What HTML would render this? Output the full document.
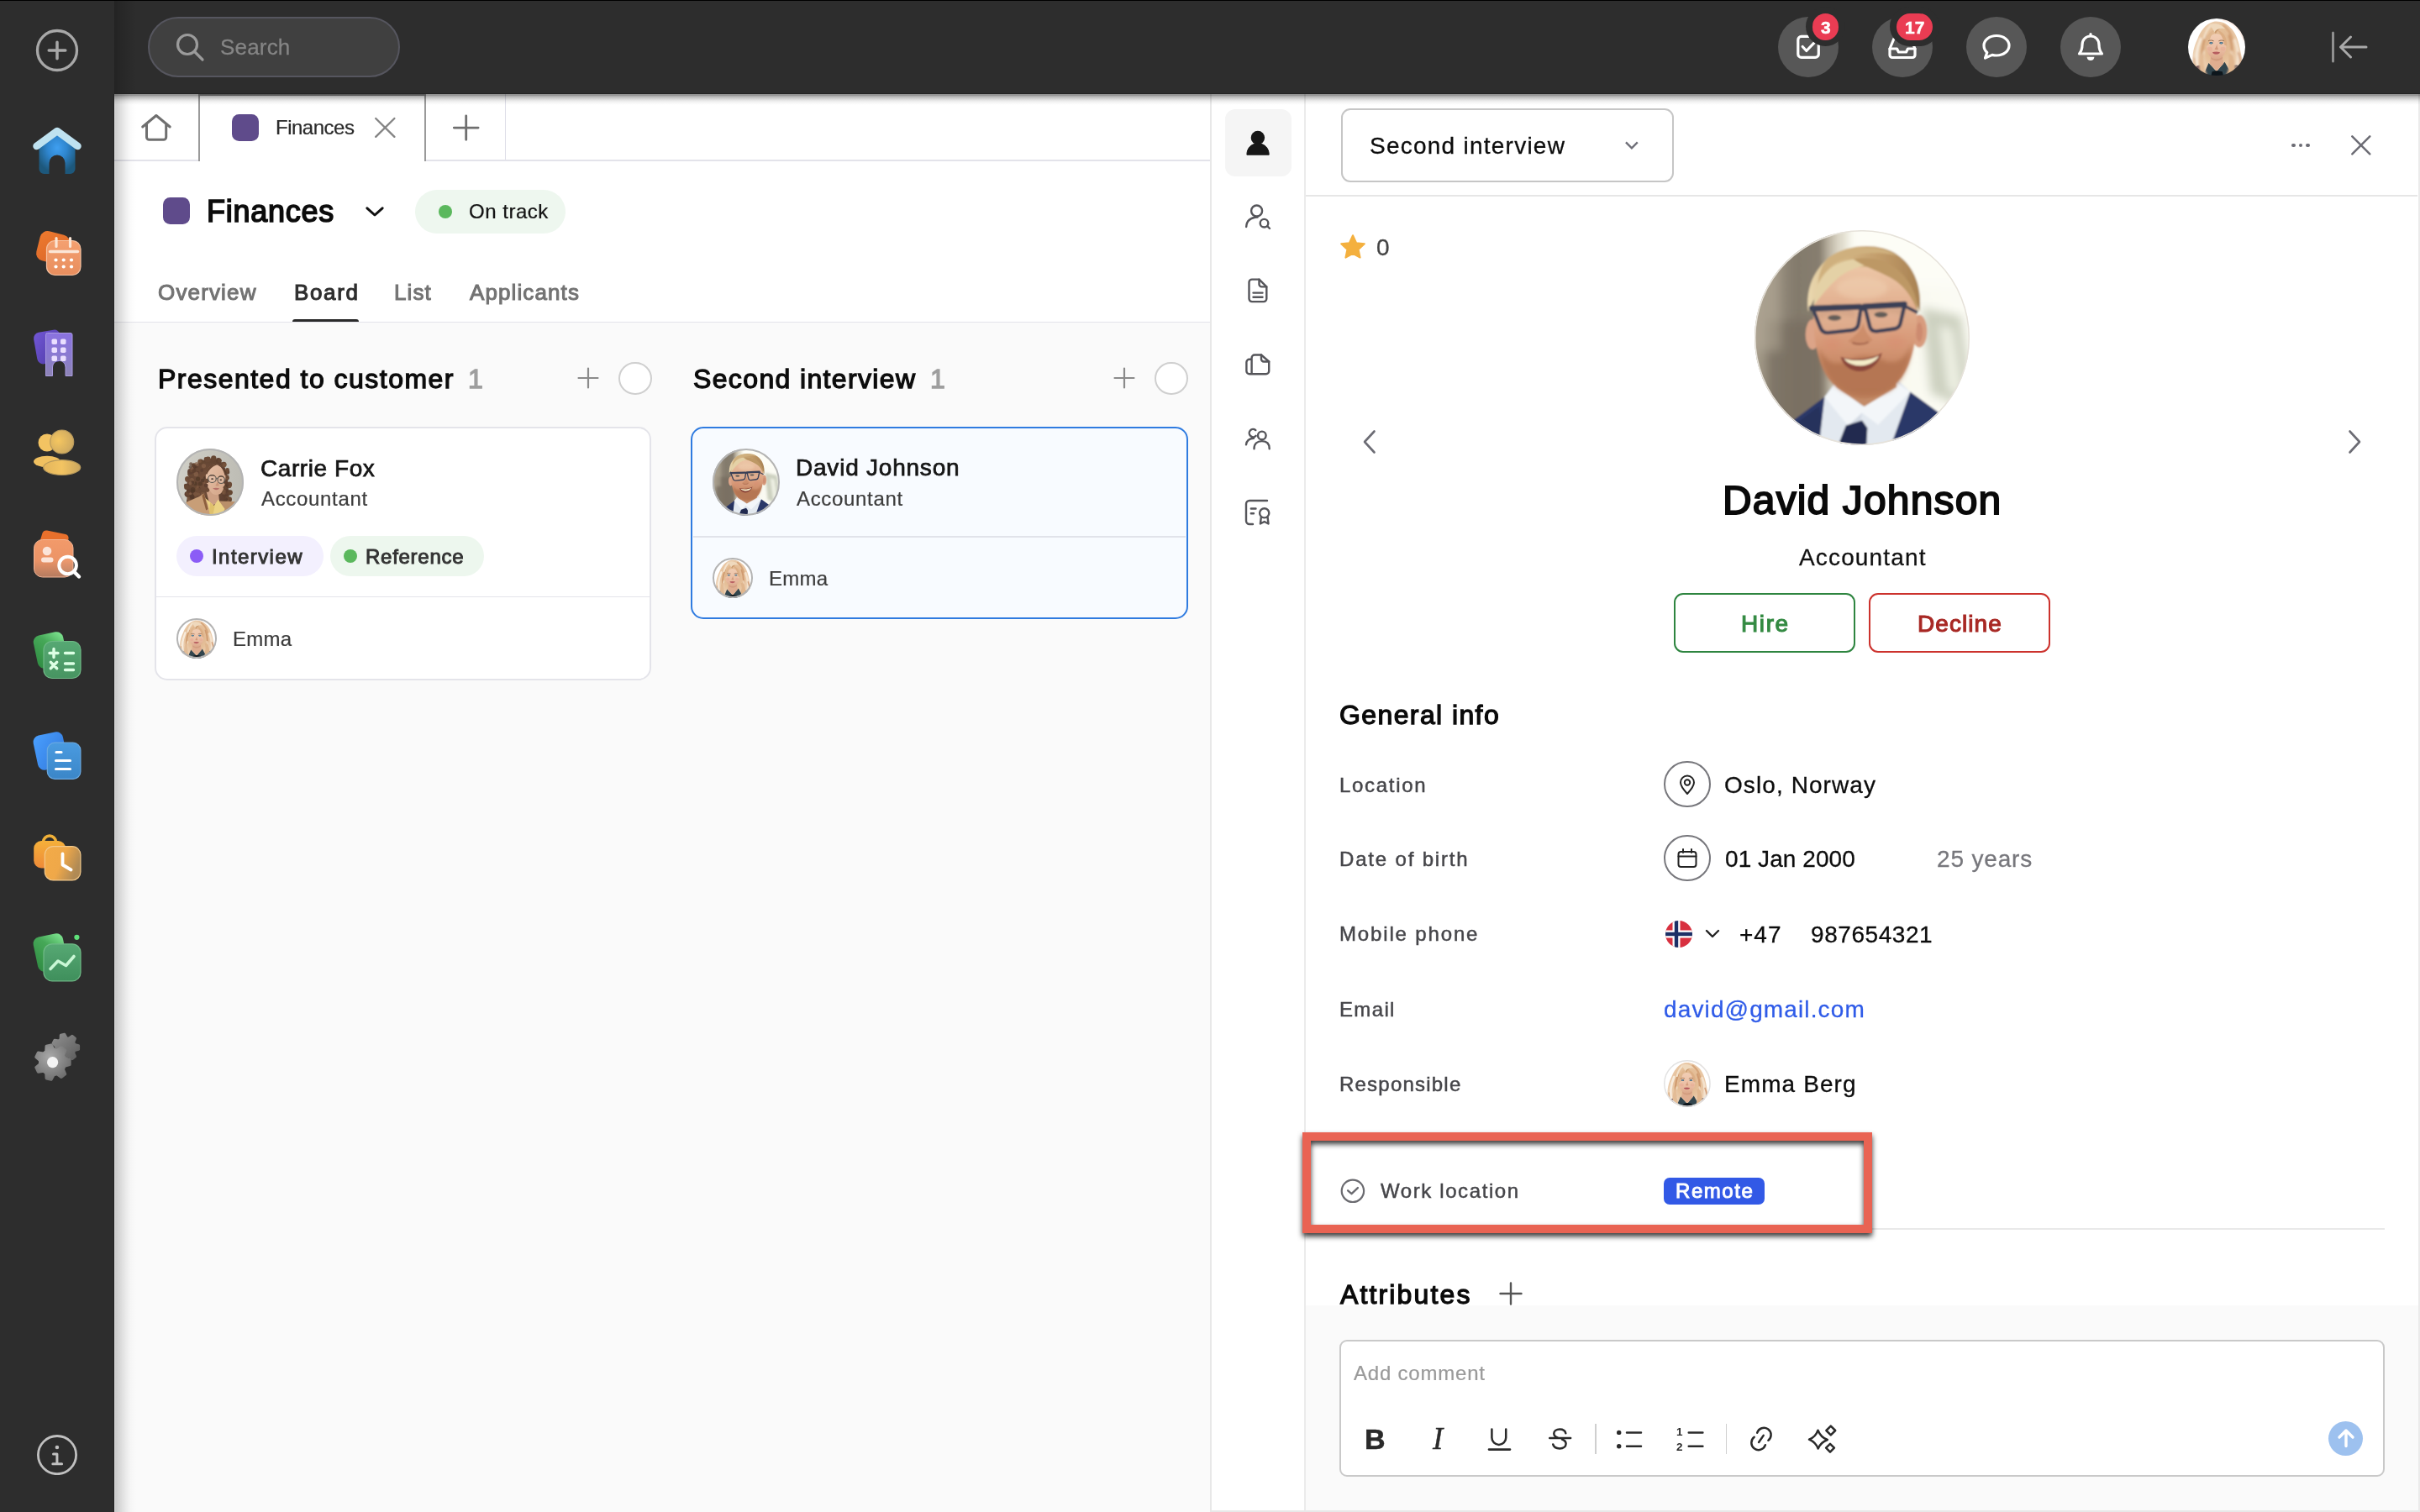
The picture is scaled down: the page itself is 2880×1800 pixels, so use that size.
<!DOCTYPE html>
<html><head><meta charset="utf-8"><title>Finances</title>
<style>
html,body{margin:0;padding:0;}
body{width:2880px;height:1800px;overflow:hidden;position:relative;background:#fafafa;font-family:"Liberation Sans",sans-serif;}
body div,body svg,body span.t{position:absolute;box-sizing:border-box;}
span.t{will-change:transform;white-space:nowrap;line-height:1;display:block;}
</style></head><body>
<div style="left:136px;top:111px;width:1305px;height:274px;background:#fff;"></div>
<div style="left:136px;top:190.2px;width:1305px;height:1.8px;background:#e3e3ea;"></div>
<div style="left:136px;top:382.6px;width:1305px;height:1.8px;background:#e3e3ea;"></div>
<div style="left:136px;top:384.4px;width:1305px;height:1416px;background:#fafafa;"></div>
<div style="left:136px;top:111px;width:28px;height:1689px;background:linear-gradient(to right,rgba(0,0,0,.15),rgba(0,0,0,.19) 7%,rgba(0,0,0,.145) 21%,rgba(0,0,0,.09) 39%,rgba(0,0,0,.05) 54%,rgba(0,0,0,.024) 66%,rgba(0,0,0,.008) 79%,rgba(0,0,0,0) 96%);"></div>
<div style="left:235.9px;top:112px;width:2px;height:80px;background:#9a9a9a;"></div>
<div style="left:235.9px;top:112px;width:270.8px;height:2.2px;background:#9a9a9a;"></div>
<div style="left:504.8px;top:112px;width:2px;height:80px;background:#9a9a9a;"></div>
<div style="left:600.5px;top:112px;width:1.6px;height:78px;background:#dedee8;"></div>
<div style="left:237.5px;top:190px;width:267.5px;height:2px;background:#fff;"></div>
<svg style="left:166px;top:134px;" width="40" height="36" viewBox="0 0 40 36"><path d="M3.700 17 L19.900 3.500 L36.200 17 M8.500 14 V29.200 a3 3 0 0 0 3 3 H28.700 a3 3 0 0 0 3-3 V14" fill="none" stroke="#6f6f6f" stroke-width="3" stroke-linecap="round" stroke-linejoin="round"/></svg>
<div style="left:276px;top:136px;width:32px;height:32px;background:#5f4b8b;border-radius:8.500px;"></div>
<span class="t" style="left:327.55px;top:140.48px;font-size:24px;font-weight:400;color:#2b2b2b;letter-spacing:-0.498px;-webkit-text-stroke:0.24px #2b2b2b;">Finances</span>
<svg style="left:443px;top:138px;" width="30" height="28" viewBox="0 0 30 28"><path d="M4.200 3 L26.400 24.800 M26.400 3 L4.200 24.800" stroke="#858585" stroke-width="2.400" stroke-linecap="round"/></svg>
<svg style="left:537px;top:135px;" width="36" height="34" viewBox="0 0 36 34"><path d="M17.700 3 V31.300 M3.300 17.100 H32.100" stroke="#6f6f6f" stroke-width="2.800" stroke-linecap="round"/></svg>
<div style="left:194px;top:235px;width:32px;height:32px;background:#5f4b8b;border-radius:8.500px;"></div>
<span class="t" style="left:246.15px;top:234.03px;font-size:36px;font-weight:400;color:#0c0c0c;letter-spacing:0.754px;-webkit-text-stroke:1.6px #0c0c0c;">Finances</span>
<svg style="left:433px;top:243px;" width="26" height="24" viewBox="0 0 26 24"><path d="M3.900 4.800 L13 13 L22.100 4.800" fill="none" stroke="#111" stroke-width="3" stroke-linecap="round" stroke-linejoin="round"/></svg>
<div style="left:494px;top:226px;width:179px;height:52px;background:#eef7ef;border-radius:26px;"></div>
<div style="left:522px;top:244.3px;width:16px;height:16px;background:#5bb85d;border-radius:50%;"></div>
<span class="t" style="left:558.18px;top:240.48px;font-size:24px;font-weight:400;color:#141414;letter-spacing:0.524px;-webkit-text-stroke:0.24px #141414;">On track</span>
<span class="t" style="left:188.29px;top:334.89px;font-size:26px;font-weight:400;color:#737373;letter-spacing:1.153px;-webkit-text-stroke:1.04px #737373;">Overview</span>
<span class="t" style="left:349.59px;top:334.89px;font-size:26px;font-weight:400;color:#2e2e2e;letter-spacing:1.622px;-webkit-text-stroke:1.04px #2e2e2e;">Board</span>
<span class="t" style="left:469.49px;top:334.89px;font-size:26px;font-weight:400;color:#737373;letter-spacing:1.074px;-webkit-text-stroke:1.04px #737373;">List</span>
<span class="t" style="left:558.67px;top:334.89px;font-size:26px;font-weight:400;color:#737373;letter-spacing:1.110px;-webkit-text-stroke:1.04px #737373;">Applicants</span>
<div style="left:348.2px;top:380px;width:78.5px;height:3px;background:#2a2a2a;border-radius:3px 3px 0 0;"></div>
<span class="t" style="left:187.71px;top:434.81px;font-size:32px;font-weight:400;color:#0c0c0c;letter-spacing:1.477px;-webkit-text-stroke:1.28px #0c0c0c;">Presented to customer</span>
<span class="t" style="left:557.40px;top:434.81px;font-size:32px;font-weight:400;color:#9e9e9e;letter-spacing:0.000px;-webkit-text-stroke:1.28px #9e9e9e;">1</span>
<svg style="left:686px;top:436px;" width="28" height="28" viewBox="0 0 28 28"><path d="M14 2.500 V25.500 M2.500 14 H25.500" stroke="#8a8a8a" stroke-width="2.200" stroke-linecap="round"/></svg>
<div style="left:736px;top:430.5px;width:39.5px;height:39.5px;background:#fff;border:2px solid #cfcfcf;border-radius:50%;"></div>
<div style="left:184.3px;top:508px;width:591px;height:301.7px;background:#fff;border:2px solid #e4e4ea;border-radius:15px;"></div>
<div style="left:186.3px;top:709.6px;width:587px;height:1.8px;background:#e3e3ea;"></div>
<span class="t" style="left:310.45px;top:543.50px;font-size:28px;font-weight:400;color:#161616;letter-spacing:0.576px;-webkit-text-stroke:0.75px #161616;">Carrie Fox</span>
<span class="t" style="left:310.67px;top:582.28px;font-size:24px;font-weight:400;color:#3d3d3d;letter-spacing:0.678px;-webkit-text-stroke:0.24px #3d3d3d;">Accountant</span>
<div style="left:210px;top:638px;width:175.2px;height:48px;background:#f3f0fe;border-radius:24px;"></div>
<div style="left:226px;top:654px;width:16.2px;height:16.2px;background:#8b5cf6;border-radius:50%;"></div>
<span class="t" style="left:251.97px;top:650.98px;font-size:24px;font-weight:400;color:#333;letter-spacing:1.433px;-webkit-text-stroke:0.96px #333;">Interview</span>
<div style="left:392.7px;top:638px;width:183.3px;height:48px;background:#edf7ee;border-radius:24px;"></div>
<div style="left:409px;top:654px;width:16.2px;height:16.2px;background:#5bb85d;border-radius:50%;"></div>
<span class="t" style="left:435.31px;top:650.98px;font-size:24px;font-weight:400;color:#333;letter-spacing:0.731px;-webkit-text-stroke:0.96px #333;">Reference</span>
<span class="t" style="left:277.45px;top:748.78px;font-size:24px;font-weight:400;color:#3d3d3d;letter-spacing:0.230px;-webkit-text-stroke:0.24px #3d3d3d;">Emma</span>
<span class="t" style="left:825.19px;top:434.81px;font-size:32px;font-weight:400;color:#0c0c0c;letter-spacing:1.361px;-webkit-text-stroke:1.28px #0c0c0c;">Second interview</span>
<span class="t" style="left:1106.70px;top:434.81px;font-size:32px;font-weight:400;color:#9e9e9e;letter-spacing:0.000px;-webkit-text-stroke:1.28px #9e9e9e;">1</span>
<svg style="left:1324px;top:436px;" width="28" height="28" viewBox="0 0 28 28"><path d="M14 2.500 V25.500 M2.500 14 H25.500" stroke="#8a8a8a" stroke-width="2.200" stroke-linecap="round"/></svg>
<div style="left:1374px;top:430.5px;width:39.5px;height:39.5px;background:#fff;border:2px solid #cfcfcf;border-radius:50%;"></div>
<div style="left:822.3px;top:508px;width:591.5px;height:229.3px;background:#f8fbff;border:2.400px solid #2f7be0;border-radius:15px;"></div>
<div style="left:825px;top:638.2px;width:586px;height:1.8px;background:#e1e3ea;"></div>
<span class="t" style="left:947.48px;top:543.20px;font-size:28px;font-weight:400;color:#161616;letter-spacing:0.778px;-webkit-text-stroke:0.75px #161616;">David Johnson</span>
<span class="t" style="left:948.37px;top:582.28px;font-size:24px;font-weight:400;color:#3d3d3d;letter-spacing:0.678px;-webkit-text-stroke:0.24px #3d3d3d;">Accountant</span>
<span class="t" style="left:915.15px;top:677.28px;font-size:24px;font-weight:400;color:#3d3d3d;letter-spacing:0.263px;-webkit-text-stroke:0.24px #3d3d3d;">Emma</span>
<div style="left:1440px;top:112px;width:1440px;height:1688px;background:#fff;"></div>
<div style="left:1440px;top:112px;width:2px;height:1688px;background:#e8e8e8;"></div>
<div style="left:1552px;top:112px;width:1.8px;height:1688px;background:#ebebeb;"></div>
<div style="left:2878px;top:112px;width:2px;height:1688px;background:#ebebeb;"></div>
<div style="left:1554px;top:232px;width:1323px;height:2px;background:#e6e6e6;"></div>
<div style="left:1457.5px;top:130px;width:79px;height:80px;background:#f5f5f5;border-radius:12px;"></div>
<svg style="left:1477px;top:149px;" width="40" height="40" viewBox="0 0 40 40"><circle cx="19.900" cy="15" r="8.200" fill="#171717"/><path d="M6.900 35.200 C6.900 27 12.500 21.800 20 21.800 C27.500 21.800 33.200 27 33.200 35.200 Z" fill="#171717" stroke="#171717" stroke-width="1" stroke-linejoin="round"/></svg>
<svg style="left:1477px;top:237px;" width="42" height="42" viewBox="0 0 42 42"><circle cx="18.600" cy="14" r="6.500" stroke="#55555a" stroke-width="2.400" fill="none" stroke-linecap="round" stroke-linejoin="round"/><path d="M6.200 33 C6.500 26.500 11 22 19.500 21.500" stroke="#55555a" stroke-width="2.400" fill="none" stroke-linecap="round" stroke-linejoin="round"/><circle cx="27.500" cy="28.700" r="4.800" stroke="#55555a" stroke-width="2.400" fill="none" stroke-linecap="round" stroke-linejoin="round"/><path d="M31.200 32.200 L34 35" stroke="#55555a" stroke-width="2.400" fill="none" stroke-linecap="round" stroke-linejoin="round"/></svg>
<svg style="left:1479px;top:326px;" width="36" height="42" viewBox="0 0 36 42"><path d="M7.500 10.100 a3.500 3.500 0 0 1 3.500-3.500 H19.500 L28.300 15.400 V29.600 a3.500 3.500 0 0 1 -3.500 3.500 H11 a3.500 3.500 0 0 1 -3.500-3.500 Z" stroke="#55555a" stroke-width="2.400" fill="none" stroke-linecap="round" stroke-linejoin="round"/><path d="M19.500 6.600 V12.400 a3 3 0 0 0 3 3 H28.300" stroke="#55555a" stroke-width="2.400" fill="none" stroke-linecap="round" stroke-linejoin="round"/><path d="M12.500 22.600 H23.500 M12.500 27.800 H23.500" stroke="#55555a" stroke-width="2.400" fill="none" stroke-linecap="round" stroke-linejoin="round"/></svg>
<svg style="left:1477px;top:416px;" width="42" height="38" viewBox="0 0 42 38"><path d="M12.600 29.300 V10 a3.500 3.500 0 0 1 3.500-3.500 H24 L33.200 14.500 V25.800 a3.500 3.500 0 0 1 -3.500 3.500 H9.900 a3.500 3.500 0 0 1 -3.500-3.500 V15.300 a3.500 3.500 0 0 1 3.500-3.500 H12.600" stroke="#55555a" stroke-width="2.400" fill="none" stroke-linecap="round" stroke-linejoin="round"/><path d="M24 6.500 V11.500 a3 3 0 0 0 3 3 H33.200" stroke="#55555a" stroke-width="2.400" fill="none" stroke-linecap="round" stroke-linejoin="round"/></svg>
<svg style="left:1476px;top:503px;" width="42" height="38" viewBox="0 0 42 38"><circle cx="25.800" cy="15.400" r="4.800" stroke="#55555a" stroke-width="2.400" fill="none" stroke-linecap="round" stroke-linejoin="round"/><path d="M16.500 31.200 C16.500 25 20.500 22.100 25.800 22.100 C31.100 22.100 34.700 25 34.700 31.200" stroke="#55555a" stroke-width="2.400" fill="none" stroke-linecap="round" stroke-linejoin="round"/><path d="M18.300 9.100 a4.600 4.600 0 1 0 0.300 6.700" stroke="#55555a" stroke-width="2.400" fill="none" stroke-linecap="round" stroke-linejoin="round"/><path d="M7 26.400 C7.500 22 10.500 19 16 18.700" stroke="#55555a" stroke-width="2.400" fill="none" stroke-linecap="round" stroke-linejoin="round"/></svg>
<svg style="left:1477px;top:590px;" width="42" height="42" viewBox="0 0 42 42"><path d="M31 6 H10 a4 4 0 0 0 -4 4 V30 a4 4 0 0 0 4 4 H14" stroke="#55555a" stroke-width="2.400" fill="none" stroke-linecap="round" stroke-linejoin="round"/><path d="M11.800 15.500 H17.500 M11.800 21.200 H15" stroke="#55555a" stroke-width="2.400" fill="none" stroke-linecap="round" stroke-linejoin="round"/><circle cx="27.700" cy="20.800" r="5.600" stroke="#55555a" stroke-width="2.400" fill="none" stroke-linecap="round" stroke-linejoin="round"/><path d="M23.800 26 L22.900 33.500 L27.700 31 L32.500 33.500 L31.600 26" stroke="#55555a" stroke-width="2.400" fill="none" stroke-linecap="round" stroke-linejoin="round"/></svg>
<div style="left:1596px;top:129px;width:396px;height:87.7px;background:#fff;border:2px solid #c6c6c6;border-radius:11px;"></div>
<span class="t" style="left:1629.68px;top:160.10px;font-size:28px;font-weight:400;color:#0c0c0c;letter-spacing:1.245px;-webkit-text-stroke:0.3px #0c0c0c;">Second interview</span>
<svg style="left:1930px;top:164px;" width="24" height="18" viewBox="0 0 24 18"><path d="M4.950 5.400 L11.900 12.300 L18.800 5.400" fill="none" stroke="#6f6f78" stroke-width="2.400" stroke-linecap="butt" stroke-linejoin="miter"/></svg>
<div style="left:2727px;top:170.6px;width:4.8px;height:4.8px;background:#6c6c74;border-radius:50%;"></div>
<div style="left:2735.7px;top:170.6px;width:4.8px;height:4.8px;background:#6c6c74;border-radius:50%;"></div>
<div style="left:2744.4px;top:170.6px;width:4.8px;height:4.8px;background:#6c6c74;border-radius:50%;"></div>
<svg style="left:2795px;top:158px;" width="30" height="30" viewBox="0 0 30 30"><path d="M4.300 4.300 L25.300 25.300 M25.300 4.300 L4.300 25.300" stroke="#6c6c74" stroke-width="2.500" stroke-linecap="round"/></svg>
<svg style="left:1594px;top:278px;" width="32" height="32" viewBox="0 0 32 32"><path d="M16 2.200 L20.100 11.200 L29.800 12.300 L22.600 19 L24.600 28.600 L16 23.800 L7.400 28.600 L9.400 19 L2.200 12.300 L11.900 11.200 Z" fill="#f4b03e" stroke="#f4b03e" stroke-width="2" stroke-linejoin="round"/></svg>
<span class="t" style="left:1637.55px;top:280.80px;font-size:28px;font-weight:400;color:#444;letter-spacing:1.235px;-webkit-text-stroke:0.28px #444;">0</span>
<svg style="left:1620px;top:510px;" width="20" height="32" viewBox="0 0 20 32"><path d="M15.500 3.500 L4 16 L15.500 28.500" fill="none" stroke="#6c6c74" stroke-width="2.600" stroke-linecap="round" stroke-linejoin="round"/></svg>
<svg style="left:2792px;top:510px;" width="20" height="32" viewBox="0 0 20 32"><path d="M4.500 3.500 L16 16 L4.500 28.500" fill="none" stroke="#6c6c74" stroke-width="2.600" stroke-linecap="round" stroke-linejoin="round"/></svg>
<span class="t" style="left:2050.01px;top:571.97px;font-size:48px;font-weight:400;color:#0a0a0a;letter-spacing:1.135px;-webkit-text-stroke:1.9px #0a0a0a;">David Johnson</span>
<span class="t" style="left:2140.59px;top:649.50px;font-size:28px;font-weight:400;color:#111;letter-spacing:1.154px;-webkit-text-stroke:0.28px #111;">Accountant</span>
<div style="left:1992.2px;top:706.1px;width:215.5px;height:71.3px;border:2.200px solid #2e8540;border-radius:11px;background:#fff;"></div>
<span class="t" style="left:2071.76px;top:729.00px;font-size:28px;font-weight:400;color:#338a42;letter-spacing:1.594px;-webkit-text-stroke:1.12px #338a42;">Hire</span>
<div style="left:2224.3px;top:706.1px;width:215.3px;height:71.3px;border:2.200px solid #cc322d;border-radius:11px;background:#fff;"></div>
<span class="t" style="left:2281.66px;top:729.00px;font-size:28px;font-weight:400;color:#a82824;letter-spacing:1.057px;-webkit-text-stroke:1.12px #a82824;">Decline</span>
<span class="t" style="left:1594.03px;top:834.81px;font-size:32px;font-weight:400;color:#0a0a0a;letter-spacing:1.395px;-webkit-text-stroke:1.28px #0a0a0a;">General info</span>
<span class="t" style="left:1593.67px;top:922.78px;font-size:24px;font-weight:400;color:#46464a;letter-spacing:1.701px;-webkit-text-stroke:0.48px #46464a;">Location</span>
<span class="t" style="left:1593.67px;top:1010.88px;font-size:24px;font-weight:400;color:#46464a;letter-spacing:1.826px;-webkit-text-stroke:0.48px #46464a;">Date of birth</span>
<span class="t" style="left:1593.67px;top:1100.48px;font-size:24px;font-weight:400;color:#46464a;letter-spacing:1.850px;-webkit-text-stroke:0.48px #46464a;">Mobile phone</span>
<span class="t" style="left:1593.67px;top:1190.28px;font-size:24px;font-weight:400;color:#46464a;letter-spacing:1.346px;-webkit-text-stroke:0.48px #46464a;">Email</span>
<span class="t" style="left:1593.67px;top:1278.78px;font-size:24px;font-weight:400;color:#46464a;letter-spacing:1.217px;-webkit-text-stroke:0.48px #46464a;">Responsible</span>
<div style="left:1980.2px;top:905.9px;width:55.6px;height:55.6px;border:2px solid #77777c;border-radius:50%;background:#fff;"></div>
<svg style="left:1996px;top:920px;" width="24" height="28" viewBox="0 0 24 28"><path d="M12 25 C7 19.500 4 15.500 4 11.500 a8 8 0 0 1 16 0 C20 15.500 17 19.500 12 25 Z" fill="none" stroke="#222" stroke-width="2" stroke-linejoin="round"/><circle cx="12" cy="11.500" r="3.200" fill="none" stroke="#222" stroke-width="2"/></svg>
<span class="t" style="left:2052.31px;top:920.90px;font-size:28px;font-weight:400;color:#0c0c0c;letter-spacing:1.087px;-webkit-text-stroke:0.28px #0c0c0c;">Oslo, Norway</span>
<div style="left:1980.2px;top:993.9px;width:55.6px;height:55.6px;border:2px solid #77777c;border-radius:50%;background:#fff;"></div>
<svg style="left:1994px;top:1008px;" width="28" height="28" viewBox="0 0 28 28"><rect x="3.500" y="6" width="21" height="18" rx="3" fill="none" stroke="#222" stroke-width="2"/><path d="M3.500 11.500 H24.500 M9 3 V7 M19 3 V7" stroke="#222" stroke-width="2" stroke-linecap="round"/></svg>
<span class="t" style="left:2052.55px;top:1008.90px;font-size:28px;font-weight:400;color:#0c0c0c;letter-spacing:0.057px;-webkit-text-stroke:0.28px #0c0c0c;">01 Jan 2000</span>
<span class="t" style="left:2305.33px;top:1008.90px;font-size:28px;font-weight:400;color:#77777c;letter-spacing:0.835px;-webkit-text-stroke:0.28px #77777c;">25 years</span>
<svg style="left:1981.5px;top:1096px;" width="32" height="32" viewBox="0 0 32 32"><defs><clipPath id="fl"><circle cx="16" cy="16" r="16"/></clipPath></defs><g clip-path="url(#fl)"><rect width="32" height="32" fill="#d8303f"/><rect x="8.500" width="9" height="32" fill="#fff"/><rect y="11.500" width="32" height="9" fill="#fff"/><rect x="10.800" width="4.400" height="32" fill="#1c2f66"/><rect y="13.800" width="32" height="4.400" fill="#1c2f66"/></g></svg>
<svg style="left:2027px;top:1104px;" width="22" height="16" viewBox="0 0 22 16"><path d="M4 4 L11 11 L18 4" fill="none" stroke="#222" stroke-width="2.300" stroke-linecap="round" stroke-linejoin="round"/></svg>
<span class="t" style="left:2069.77px;top:1098.80px;font-size:28px;font-weight:400;color:#0c0c0c;letter-spacing:1.000px;-webkit-text-stroke:0.28px #0c0c0c;">+47</span>
<span class="t" style="left:2154.83px;top:1098.80px;font-size:28px;font-weight:400;color:#0c0c0c;letter-spacing:0.556px;-webkit-text-stroke:0.28px #0c0c0c;">987654321</span>
<span class="t" style="left:1980.16px;top:1188.40px;font-size:28px;font-weight:400;color:#2f5be8;letter-spacing:1.128px;-webkit-text-stroke:0.28px #2f5be8;">david@gmail.com</span>
<span class="t" style="left:2051.84px;top:1277.20px;font-size:28px;font-weight:400;color:#0c0c0c;letter-spacing:1.100px;-webkit-text-stroke:0.28px #0c0c0c;">Emma Berg</span>
<div style="left:1594px;top:1461.5px;width:1244px;height:2px;background:#e9e9e9;"></div>
<svg style="left:1595px;top:1403px;" width="32" height="32" viewBox="0 0 32 32"><circle cx="14.900" cy="14.800" r="13.200" fill="none" stroke="#6b6b70" stroke-width="2.200"/><path d="M9.100 14.300 L13.500 18.200 L20.900 11.100" fill="none" stroke="#6b6b70" stroke-width="2.400" stroke-linecap="round" stroke-linejoin="round"/></svg>
<span class="t" style="left:1642.83px;top:1406.28px;font-size:24px;font-weight:400;color:#46464a;letter-spacing:1.600px;-webkit-text-stroke:0.48px #46464a;">Work location</span>
<div style="left:1980.3px;top:1402.2px;width:119.5px;height:31.6px;background:#3259e6;border-radius:7px;"></div>
<span class="t" style="left:1994.11px;top:1406.08px;font-size:24px;font-weight:400;color:#fff;letter-spacing:1.548px;-webkit-text-stroke:0.96px #fff;">Remote</span>
<span class="t" style="left:1594.98px;top:1524.91px;font-size:32px;font-weight:400;color:#0a0a0a;letter-spacing:2.141px;-webkit-text-stroke:1.28px #0a0a0a;">Attributes</span>
<svg style="left:1783px;top:1525px;" width="30" height="30" viewBox="0 0 30 30"><path d="M15 2.500 V27.500 M2.500 15 H27.500" stroke="#555" stroke-width="2.400" stroke-linecap="round"/></svg>
<div style="left:1550.1px;top:1348.1px;width:677.8px;height:119.8px;border:10px solid #e96353;filter:drop-shadow(.600px 4.200px 3.200px rgba(0,0,0,.78));background:transparent;"></div>
<div style="left:1554px;top:1554px;width:1324px;height:244px;background:#fafafa;"></div>
<div style="left:1594px;top:1594.5px;width:1244px;height:163.5px;background:#fff;border:2px solid #c9c9c9;border-radius:9px;"></div>
<span class="t" style="left:1611.07px;top:1622.68px;font-size:24px;font-weight:400;color:#9a9a9a;letter-spacing:0.792px;-webkit-text-stroke:0.24px #9a9a9a;">Add comment</span>
<span class="t" style="left:1624.23px;top:1696.32px;font-size:34px;font-weight:700;color:#2a2a2a;letter-spacing:2.465px;-webkit-text-stroke:0.6px #2a2a2a;">B</span>
<span class="t" style="left:1704.50px;top:1694.28px;font-size:37px;font-weight:400;color:#2a2a2a;letter-spacing:0.000px;font-style:italic;-webkit-text-stroke:0.37px #2a2a2a;font-family:'Liberation Serif',serif;">I</span>
<svg style="left:1768px;top:1696px;" width="34" height="34" viewBox="0 0 34 34"><path d="M7.400 5.500 V15.500 a8.400 8.400 0 0 0 16.800 0 V5.500" stroke="#2a2a2a" stroke-width="2.500" fill="none" stroke-linecap="round" stroke-linejoin="round"/><path d="M4 29.600 H29" stroke="#2a2a2a" stroke-width="2.600" stroke-linecap="round"/></svg>
<svg style="left:1840px;top:1696px;" width="34" height="34" viewBox="0 0 34 34"><path d="M23.300 10.200 C22.500 7 19.800 5.600 16.300 5.600 C12 5.600 9.300 7.800 9.300 10.600 C9.300 13 10.800 14.500 13.500 15.500" stroke="#2a2a2a" stroke-width="2.500" fill="none" stroke-linecap="round" stroke-linejoin="round"/><path d="M19 17.500 C22 18.600 23.600 20.200 23.600 22.800 C23.600 26 20.600 28.400 16.200 28.400 C12 28.400 9 26.600 8.200 23.400" stroke="#2a2a2a" stroke-width="2.500" fill="none" stroke-linecap="round" stroke-linejoin="round"/><path d="M4.200 16 H29.200" stroke="#2a2a2a" stroke-width="2.400" stroke-linecap="round"/></svg>
<div style="left:1898px;top:1695px;width:1.8px;height:36px;background:#cfcfcf;"></div>
<svg style="left:1922px;top:1696px;" width="34" height="34" viewBox="0 0 34 34"><circle cx="4.700" cy="9.400" r="2.700" fill="#2a2a2a"/><circle cx="4.700" cy="25.800" r="2.700" fill="#2a2a2a"/><path d="M14 9.400 H31 M14 25.800 H31" stroke="#2a2a2a" stroke-width="2.500" fill="none" stroke-linecap="round" stroke-linejoin="round"/></svg>
<svg style="left:1994px;top:1694px;" width="36" height="38" viewBox="0 0 36 38"><path d="M15.700 11.400 H32.400 M15.700 27.800 H32.400" stroke="#2a2a2a" stroke-width="2.500" fill="none" stroke-linecap="round" stroke-linejoin="round"/></svg>
<span class="t" style="left:1995.35px;top:1698.27px;font-size:13.5px;font-weight:700;color:#2a2a2a;letter-spacing:0.000px;">1</span>
<span class="t" style="left:1995.33px;top:1716.17px;font-size:13.5px;font-weight:700;color:#2a2a2a;letter-spacing:0.000px;">2</span>
<div style="left:2053.5px;top:1695px;width:1.8px;height:36px;background:#cfcfcf;"></div>
<svg style="left:2080px;top:1695px;" width="34" height="34" viewBox="0 0 34 34"><path d="M11.200 10.700 A8.400 8.400 0 1 1 24.400 19.800" stroke="#2a2a2a" stroke-width="2.500" fill="none" stroke-linecap="round" stroke-linejoin="round"/><path d="M7.700 15.800 A8.500 8.500 0 1 0 20.900 25.200" stroke="#2a2a2a" stroke-width="2.500" fill="none" stroke-linecap="round" stroke-linejoin="round"/><path d="M18.700 13.900 L13.100 22" stroke="#2a2a2a" stroke-width="2.500" fill="none" stroke-linecap="round" stroke-linejoin="round"/></svg>
<svg style="left:2150px;top:1693px;" width="40" height="40" viewBox="0 0 40 40"><path d="M3 20.700 Q10.800 17.800 13.500 9.700 Q16.800 18 24.800 21 Q16.800 24 13.700 31.500 Q10.800 24 3 20.700 Z" stroke="#2a2a2a" stroke-width="2.500" fill="none" stroke-linecap="round" stroke-linejoin="round"/><path d="M28.800 4.600 L34.200 10 L28.800 15.400 L23.400 10 Z" stroke="#2a2a2a" stroke-width="2.500" fill="none" stroke-linejoin="round"/><path d="M28 25.800 L32.900 30.700 L28 35.600 L23.100 30.700 Z" stroke="#2a2a2a" stroke-width="2.500" fill="none" stroke-linejoin="round"/></svg>
<div style="left:2771.3px;top:1691.8px;width:41px;height:41px;background:#9dc1ef;border-radius:50%;"></div>
<svg style="left:2776.8px;top:1697.3px;" width="30" height="30" viewBox="0 0 30 30"><path d="M15 24.500 V6.500 M7 14 L15 6 L23 14" fill="none" stroke="#fff" stroke-width="3.400" stroke-linecap="round" stroke-linejoin="round"/></svg>
<div style="left:1440px;top:1798px;width:1440px;height:2px;background:#e8e8e8;"></div>
<div style="left:136px;top:112px;width:2744px;height:13px;background:linear-gradient(to bottom,rgba(0,0,0,.43),rgba(0,0,0,.42) 12%,rgba(0,0,0,.29) 22%,rgba(0,0,0,.19) 41%,rgba(0,0,0,.114) 54%,rgba(0,0,0,.06) 69%,rgba(0,0,0,.024) 85%,rgba(0,0,0,0));"></div>
<div style="left:0px;top:0px;width:136px;height:1800px;background:#2d2d2d;"></div>
<div style="left:0px;top:0px;width:2880px;height:112px;background:#2d2d2d;"></div>
<div style="left:136px;top:0px;width:26px;height:111px;background:linear-gradient(to right,rgba(0,0,0,.22),rgba(0,0,0,.14) 30%,rgba(0,0,0,0));"></div>
<div style="left:0px;top:0px;width:2880px;height:1.4px;background:linear-gradient(to bottom,#000 70%,rgba(0,0,0,.3));"></div>
<div style="left:135px;top:112px;width:1px;height:1688px;background:#232323;"></div>
<div style="left:136px;top:111px;width:2744px;height:1px;background:#232323;"></div>
<svg style="left:42px;top:34px;" width="52" height="52" viewBox="0 0 52 52"><circle cx="26" cy="26" r="23.5" fill="none" stroke="#a8a8a8" stroke-width="3.3"/><path d="M26 16.2v19.600M16.200 26h19.600" stroke="#a8a8a8" stroke-width="3.5" stroke-linecap="round"/></svg>
<div style="left:176px;top:20px;width:300px;height:72px;background:#404040;border:2px solid #56565f;border-radius:36px;"></div>
<svg style="left:206px;top:36px;" width="40" height="40" viewBox="0 0 40 40"><circle cx="17" cy="17" r="11.5" fill="none" stroke="#9b9b9b" stroke-width="3.2"/><path d="M25.5 25.5L35 35" stroke="#9b9b9b" stroke-width="3.2" stroke-linecap="round"/></svg>
<span class="t" style="left:261.55px;top:42.99px;font-size:26px;font-weight:400;color:#858585;letter-spacing:0.186px;-webkit-text-stroke:0.26px #858585;">Search</span>
<svg style="left:44px;top:1708px;" width="48" height="48" viewBox="0 0 48 48"><circle cx="24" cy="24.100" r="22.600" fill="none" stroke="#c0c0c0" stroke-width="2.800"/><circle cx="23.900" cy="15" r="2.300" fill="#c0c0c0"/><path d="M19.500 23h4.400v11.500M18.800 34.700h10.800" fill="none" stroke="#c0c0c0" stroke-width="3" stroke-linecap="round" stroke-linejoin="round"/></svg>
<div style="left:2116px;top:20px;width:72px;height:72px;background:#575757;border-radius:50%;"></div>
<div style="left:2228px;top:20px;width:72px;height:72px;background:#575757;border-radius:50%;"></div>
<div style="left:2340px;top:20px;width:72px;height:72px;background:#575757;border-radius:50%;"></div>
<div style="left:2452px;top:20px;width:72px;height:72px;background:#575757;border-radius:50%;"></div>
<svg style="left:2134px;top:38px;" width="36" height="36" viewBox="0 0 36 36"><rect x="5.8" y="5.4" width="24.5" height="25" rx="4" stroke="#fff" stroke-width="3.2" fill="none" stroke-linecap="round" stroke-linejoin="round"/><path d="M11.2 17.5 L15.8 22.5 L25.1 12.9" stroke="#fff" stroke-width="3.2" fill="none" stroke-linecap="round" stroke-linejoin="round"/></svg>
<svg style="left:2246px;top:38px;" width="36" height="36" viewBox="0 0 36 36"><path d="M9 5.5H27L33 20V27.5a3 3 0 0 1-3 3H6a3 3 0 0 1-3-3V20Z" stroke="#fff" stroke-width="3.2" fill="none" stroke-linecap="round" stroke-linejoin="round"/><path d="M3 20h8.5l2 4h9l2-4H33" stroke="#fff" stroke-width="3.2" fill="none" stroke-linecap="round" stroke-linejoin="round"/></svg>
<svg style="left:2357px;top:38px;" width="38" height="36" viewBox="0 0 38 36"><path d="M19 4.5c8.6 0 15 5.2 15 11.7S27.600 28 19 28c-1.800 0-3.500-.2-5.100-.6L5.500 31l2.300-6.500C5.400 22.400 4 19.500 4 16.200 4 9.700 10.400 4.500 19 4.500Z" stroke="#fff" stroke-width="3.2" fill="none" stroke-linecap="round" stroke-linejoin="round"/></svg>
<svg style="left:2470px;top:36px;" width="36" height="40" viewBox="0 0 36 40"><path d="M18 4.500v2.500M18 7c-6 0-10 4.500-10 10.500 0 5-1.500 8-3.500 10.500h27C29.500 25.500 28 22.500 28 17.500 28 11.500 24 7 18 7Z" stroke="#fff" stroke-width="3.2" fill="none" stroke-linecap="round" stroke-linejoin="round"/><path d="M14.500 32.500a3.600 3.600 0 0 0 7 0Z" fill="#fff" stroke="#fff" stroke-width="1.5"/></svg>
<div style="left:2148.9px;top:8.3px;width:47px;height:47px;background:#2d2d2d;border-radius:50%;"></div>
<div style="left:2156.6px;top:15.9px;width:31.7px;height:31.7px;background:#ea3c53;border-radius:50%;"></div>
<span class="t" style="left:2166.57px;top:21.62px;font-size:21px;font-weight:700;color:#fff;letter-spacing:-0.038px;-webkit-text-stroke:0.5px #fff;">3</span>
<div style="left:2249.2px;top:8.3px;width:58.7px;height:47px;background:#2d2d2d;border-radius:23.500px;"></div>
<div style="left:2257.1px;top:15.9px;width:43px;height:31.7px;background:#ea3c53;border-radius:16px;"></div>
<span class="t" style="left:2267.13px;top:21.52px;font-size:21px;font-weight:700;color:#fff;letter-spacing:0.187px;-webkit-text-stroke:0.5px #fff;">17</span>
<svg style="left:2770px;top:34px;" width="52" height="44" viewBox="0 0 52 44"><path d="M6.500 5v34" stroke="#8f8f8f" stroke-width="3" stroke-linecap="round" fill="none"/><path d="M46 22H15.500M27.500 10L15.500 22l12 12" stroke="#a9a9a9" stroke-width="3" stroke-linecap="round" stroke-linejoin="round" fill="none"/></svg>
<svg style="left:36px;top:148px;" width="64" height="64" viewBox="0 0 64 64"><defs><radialGradient id="hb" cx="50%" cy="38%" r="60%"><stop offset="0" stop-color="#3f9ff0"/><stop offset=".45" stop-color="#2f86cf"/><stop offset="1" stop-color="#1d587c"/></radialGradient></defs>
<path d="M10.500 27.500 V53 a6 6 0 0 0 6 6 H22.500 V46 a9.500 9.500 0 0 1 19 0 V59 H47.500 a6 6 0 0 0 6-6 V27.500 L32 9 Z" fill="url(#hb)"/>
<path d="M7.500 26 L32 8 L56.500 26" fill="none" stroke="#bfe2f0" stroke-width="8.500" stroke-linecap="round" stroke-linejoin="round"/>
</svg>
<svg style="left:36px;top:268px;" width="64" height="64" viewBox="0 0 64 64"><defs><linearGradient id="cb" x1="0" y1="0" x2="1" y2="1"><stop offset="0" stop-color="#ee7a2e"/><stop offset="1" stop-color="#d8642a"/></linearGradient>
<linearGradient id="cf" x1="0" y1="0" x2="0" y2="1"><stop offset="0" stop-color="#f4a070"/><stop offset="1" stop-color="#e88e5e"/></linearGradient></defs>
<rect x="9" y="9" width="36" height="36" rx="9" transform="rotate(14 27 27)" fill="url(#cb)"/>
<rect x="19.500" y="18.500" width="40.500" height="41" rx="10" fill="url(#cf)" stroke="#f7c3a3" stroke-width="1.200"/>
<path d="M31 15.500v10M47.500 15.500v10" stroke="#fbe6d6" stroke-width="3.200" stroke-linecap="round"/>
<path d="M23.500 31.500h33" stroke="#fbe6d6" stroke-width="3.400" stroke-linecap="round"/>
<g fill="#fff"><circle cx="30.500" cy="41.500" r="2.100"/><circle cx="39.700" cy="41.500" r="2.100"/><circle cx="49" cy="41.500" r="2.100"/><circle cx="30.500" cy="49.500" r="2.100"/><circle cx="39.700" cy="49.500" r="2.100"/><circle cx="49" cy="49.500" r="2.100"/></g>
</svg>
<svg style="left:36px;top:388px;" width="64" height="64" viewBox="0 0 64 64"><defs><linearGradient id="bb" x1="0" y1="0" x2="1" y2="1"><stop offset="0" stop-color="#7257d6"/><stop offset="1" stop-color="#4a379f"/></linearGradient>
<linearGradient id="bf" x1="0" y1="0" x2="0" y2="1"><stop offset="0" stop-color="#8a72e0"/><stop offset=".55" stop-color="#8b7bd0"/><stop offset="1" stop-color="#8d84b4"/></linearGradient></defs>
<rect x="6" y="6" width="32" height="38" rx="7" transform="rotate(-10 22 25)" fill="url(#bb)"/>
<path d="M18.500 10.500 a2 2 0 0 1 2-2 H48 a2 2 0 0 1 2 2 V59.500 H42 V49 a7.500 7.500 0 0 0 -15.500 0 V59.500 H18.500 Z" fill="url(#bf)" stroke="#a99be0" stroke-width="1"/>
<g fill="#eadfff"><rect x="25.500" y="15.500" width="6.500" height="6.500" rx="1.800"/><rect x="36" y="15.500" width="6.500" height="6.500" rx="1.800"/><rect x="25.500" y="25.500" width="6.500" height="6.500" rx="1.800"/><rect x="36" y="25.500" width="6.500" height="6.500" rx="1.800"/><rect x="25.500" y="35.500" width="6.500" height="6.500" rx="1.800"/><rect x="36" y="35.500" width="6.500" height="6.500" rx="1.800"/></g>
</svg>
<svg style="left:36px;top:508px;" width="64" height="64" viewBox="0 0 64 64"><defs><radialGradient id="pf" cx="35%" cy="45%" r="70%"><stop offset="0" stop-color="#f5c660"/><stop offset="1" stop-color="#c9a661"/></radialGradient>
<linearGradient id="pf2" x1="0" y1="0" x2="1" y2="0"><stop offset="0" stop-color="#e3b55c"/><stop offset=".5" stop-color="#f3c462"/><stop offset="1" stop-color="#caa65f"/></linearGradient></defs>
<circle cx="20" cy="19" r="10.500" fill="#f3c362"/>
<ellipse cx="20" cy="41.500" rx="16" ry="6.800" fill="#f0c060"/>
<circle cx="37.700" cy="18" r="14" fill="url(#pf)" stroke="#b89a5c" stroke-width="1.200"/>
<ellipse cx="37.700" cy="48.500" rx="22" ry="8.800" fill="url(#pf2)" stroke="#b89a5c" stroke-width="1.200"/>
</svg>
<svg style="left:36px;top:628px;" width="64" height="64" viewBox="0 0 64 64"><defs><linearGradient id="rf" x1="0" y1="0" x2="0" y2="1"><stop offset="0" stop-color="#f29a6a"/><stop offset=".55" stop-color="#ec9467"/><stop offset="1" stop-color="#b47b60"/></linearGradient></defs>
<path d="M11 18 L14.500 6.500 a5 5 0 0 1 5.500-3 L42 8 a5 5 0 0 1 3.500 5.500 L44.500 18 Z" fill="#e8702c"/>
<rect x="4.500" y="14.500" width="46.500" height="44.500" rx="10" fill="url(#rf)" stroke="#f2b596" stroke-width="1"/>
<circle cx="20" cy="28" r="5.300" fill="#fbe4d8"/>
<rect x="13" y="35.500" width="14.500" height="6" rx="3" fill="#fbe4d8"/>
<circle cx="44.600" cy="45" r="10.300" fill="rgba(255,255,255,.05)" stroke="#fff" stroke-width="4"/>
<path d="M52 52.500 L58 58.500" stroke="#fff" stroke-width="4.400" stroke-linecap="round"/>
</svg>
<svg style="left:36px;top:748px;" width="64" height="64" viewBox="0 0 64 64"><defs><linearGradient id="gb" x1="0" y1="1" x2="1" y2="0"><stop offset="0" stop-color="#2e8a41"/><stop offset=".6" stop-color="#46a858"/><stop offset="1" stop-color="#86ec98"/></linearGradient>
<linearGradient id="gf" x1="0" y1="0" x2="0" y2="1"><stop offset="0" stop-color="#56a873"/><stop offset="1" stop-color="#479461"/></linearGradient></defs>
<rect x="6" y="6" width="36" height="40" rx="8" transform="rotate(-12 24 26)" fill="url(#gb)"/>
<rect x="16" y="15.500" width="44" height="44" rx="10" fill="url(#gf)" stroke="#6fba86" stroke-width="1.200"/>
<g stroke="#dcffe4" stroke-width="3.400" stroke-linecap="round"><path d="M23 29.500h10M28 24.500v10M41.500 29.500h10M24.300 40.300l7.400 7.400M31.700 40.300l-7.400 7.400M41.500 42h10M41.500 49.500h10"/></g>
</svg>
<svg style="left:36px;top:868px;" width="64" height="64" viewBox="0 0 64 64"><defs><linearGradient id="db" x1="0" y1="0" x2="1" y2="1"><stop offset="0" stop-color="#4aa0ff"/><stop offset="1" stop-color="#2f74d8"/></linearGradient>
<linearGradient id="df" x1="0" y1="0" x2="0" y2="1"><stop offset="0" stop-color="#4a9be0"/><stop offset="1" stop-color="#3b86c8"/></linearGradient></defs>
<rect x="6" y="5" width="36" height="42" rx="8" transform="rotate(-12 24 26)" fill="url(#db)"/>
<rect x="20.300" y="16.200" width="39.600" height="43.200" rx="9" fill="url(#df)" stroke="#6aa9e2" stroke-width="1.200"/>
<g stroke="#fff" stroke-width="3.200" stroke-linecap="round"><path d="M31 27.500h6M30.500 37.500h17M30.500 47.500h17"/></g>
</svg>
<svg style="left:36px;top:988px;" width="64" height="64" viewBox="0 0 64 64"><defs><linearGradient id="tb" x1="0" y1="0" x2="0" y2="1"><stop offset="0" stop-color="#f5b03a"/><stop offset="1" stop-color="#ee8a38"/></linearGradient>
<linearGradient id="tf" x1="0" y1="0" x2="1" y2=".4"><stop offset="0" stop-color="#f3ab48"/><stop offset=".55" stop-color="#efa849"/><stop offset="1" stop-color="#b08a55"/></linearGradient></defs>
<path d="M15.500 14.500 a7.500 7.500 0 0 1 15 0" fill="none" stroke="#f0b038" stroke-width="3.600"/>
<rect x="4.200" y="13" width="38" height="32.500" rx="9" fill="url(#tb)"/>
<rect x="17.300" y="19.700" width="42.600" height="40.200" rx="10" fill="url(#tf)" stroke="#f3c98b" stroke-width="1.200"/>
<path d="M38.500 28.500 V41.500 L48.500 47.500" fill="none" stroke="#fff" stroke-width="3.800" stroke-linecap="round" stroke-linejoin="round"/>
</svg>
<svg style="left:36px;top:1108px;" width="64" height="64" viewBox="0 0 64 64"><defs><linearGradient id="gb2" x1="0" y1="1" x2="1" y2="0"><stop offset="0" stop-color="#2e8a41"/><stop offset=".6" stop-color="#46a858"/><stop offset="1" stop-color="#86ec98"/></linearGradient>
<linearGradient id="gf2" x1="0" y1="0" x2="0" y2="1"><stop offset="0" stop-color="#56a873"/><stop offset="1" stop-color="#3f8f5c"/></linearGradient></defs>
<rect x="6" y="5" width="36" height="42" rx="8" transform="rotate(-12 24 26)" fill="url(#gb2)"/>
<rect x="16" y="15.800" width="44" height="44" rx="10" fill="url(#gf2)" stroke="#6fba86" stroke-width="1.200"/>
<path d="M24 45.500 L33 36 L42.500 41.500 L52 30.500" fill="none" stroke="#c9f7d5" stroke-width="3.600" stroke-linecap="round" stroke-linejoin="round"/>
<circle cx="55.400" cy="7.800" r="3.100" fill="#5fe07a"/>
</svg>
<svg style="left:36px;top:1228px;" width="64" height="64" viewBox="0 0 64 64"><defs><radialGradient id="g1" cx="40%" cy="35%" r="75%"><stop offset="0" stop-color="#a9a9a9"/><stop offset="1" stop-color="#6a6a6a"/></radialGradient>
<linearGradient id="g2" x1="0" y1="0" x2="1" y2="1"><stop offset="0" stop-color="#8e8e8e"/><stop offset="1" stop-color="#5c5c5c"/></linearGradient></defs><polygon points="57.35,16.85 57.35,21.15 52.67,22.41 51.32,25.21 53.25,29.66 49.89,32.34 45.98,29.47 42.95,30.16 40.68,34.44 36.49,33.49 36.30,28.64 33.87,26.70 29.10,27.60 27.24,23.72 30.91,20.55 30.91,17.45 27.24,14.28 29.10,10.40 33.87,11.30 36.30,9.36 36.49,4.51 40.68,3.56 42.95,7.84 45.98,8.53 49.89,5.66 53.25,8.34 51.32,12.79 52.67,15.59" fill="url(#g2)" stroke="url(#g2)" stroke-width="3.500" stroke-linejoin="round"/><polygon points="46.90,33.76 46.90,39.44 40.89,41.17 39.08,44.92 41.48,50.70 37.04,54.25 31.93,50.62 27.88,51.55 24.85,57.03 19.31,55.76 18.96,49.51 15.71,46.92 9.54,47.97 7.08,42.85 11.74,38.68 11.74,34.52 7.08,30.35 9.54,25.23 15.71,26.28 18.96,23.69 19.31,17.44 24.85,16.17 27.88,21.65 31.93,22.58 37.04,18.95 41.48,22.50 39.08,28.28 40.89,32.03" fill="url(#g1)" stroke="url(#g1)" stroke-width="3.500" stroke-linejoin="round"/><circle cx="26.600" cy="36.600" r="6.600" fill="#f4f4f4"/></svg>
<svg style="left:2604.0px;top:21.799999999999997px;" width="68" height="68" viewBox="0 0 100 100"><defs><clipPath id="cp1"><circle cx="50" cy="50" r="50"/></clipPath><filter id="bl1" x="-10%" y="-10%" width="120%" height="120%"><feGaussianBlur stdDeviation="0.7"/></filter></defs><g clip-path="url(#cp1)"><g filter="url(#bl1)">
<defs><radialGradient id="ehr1" cx="50%" cy="42%" r="58%"><stop offset="0" stop-color="#dcae84"/><stop offset=".55" stop-color="#e6c19b"/><stop offset="1" stop-color="#efd8bf"/></radialGradient>
<linearGradient id="efc1" x1="0" y1="0" x2="0" y2="1"><stop offset="0" stop-color="#f1cdb4"/><stop offset=".6" stop-color="#ebbfa4"/><stop offset="1" stop-color="#dba78a"/></linearGradient>
<filter id="esoft1" x="-20%" y="-20%" width="140%" height="140%"><feGaussianBlur stdDeviation="1.300"/></filter></defs>
<rect width="100" height="100" fill="#fff"/>
<path d="M60 4 C76 6 92 20 97 42 L102 20 V-2 H60 Z" fill="#fdeee6"/>
<!-- hair mass -->
<path d="M44 6 C54 3.500 66 8 73 15 C83 23 88 38 91 54 C93 66 97 76 93 86 C90 94 84 98 78 101 L24 101 C16 96 9 86 8 73 C7.500 58 12 45 17 35 C21 24 30 9.500 44 6 Z" fill="url(#ehr1)"/>
<g filter="url(#esoft1)" fill="none" stroke-linecap="round">
<path d="M22 36 C15 52 12 68 17 88" stroke="#f7ebdc" stroke-width="5"/>
<path d="M82 38 C88 54 90 70 85 90" stroke="#f4e2cd" stroke-width="5"/>
<path d="M31 30 C25 46 22 62 27 84" stroke="#d09c70" stroke-width="4"/>
<path d="M72 30 C78 46 79 64 73 86" stroke="#cf9a6f" stroke-width="4"/>
<path d="M28 58 C24 70 26 84 32 98" stroke="#eed5b8" stroke-width="4"/>
<path d="M76 58 C80 70 78 86 72 98" stroke="#ecd0b2" stroke-width="4"/>
<path d="M40 12 C34 18 30 26 28 34" stroke="#f3e2cc" stroke-width="4"/>
<path d="M62 12 C70 18 75 26 77 36" stroke="#d6a57a" stroke-width="4"/>
<path d="M88 60 C92 70 93 80 90 88" stroke="#c98f68" stroke-width="3" opacity=".8"/>
<path d="M11 70 C11 80 14 88 20 94" stroke="#d7a67c" stroke-width="3" opacity=".8"/>
</g>
<!-- clothes -->
<path d="M30 92 L36 78 L50 93 L64 76 L72 90 L76 102 H26 Z" fill="#33444e"/>
<path d="M42 93 L50 91 L60 93 L62 102 H40 Z" fill="#10161a"/>
<path d="M12 86 C16 81 22 81 26 85 L25 94 L16 93 Z" fill="#6a4a50" opacity=".9"/>
<path d="M80 82 C85 80 90 82 92 86 L88 93 L80 90 Z" fill="#75605e" opacity=".8"/>
<!-- neck -->
<path d="M40 64 H60 L62 79 L50 92 L38 79 Z" fill="#dfad90"/>
<path d="M40 66 C44 72 56 72 60 66 L60 70 C56 76 44 76 40 70 Z" fill="#c99274" opacity=".6"/>
<!-- hair over shoulders -->
<g filter="url(#esoft1)"><path d="M28 62 C26 74 28 88 34 100 L24 100 C18 90 18 76 22 64 Z" fill="#e3bc96"/>
<path d="M70 62 C74 76 72 90 66 100 L78 100 C84 90 82 76 78 64 Z" fill="#e0b68e"/></g>
<!-- face -->
<ellipse cx="49.500" cy="49" rx="17.300" ry="22" fill="url(#efc1)"/>
<!-- fringe hair over forehead -->
<path d="M31.500 48 C30 34 36 23 47 19.500 C42 26 38 34 36 46 Z" fill="#e0b78f"/>
<path d="M67.500 48 C69 34 62 23 50 19.500 C56 26 62 34 63.500 46 Z" fill="#dcae84"/>
<path d="M38 11 C45 7 58 9 65 18 C58 16 50 18 46.500 24 C44 20 41 15 38 11 Z" fill="#efd9bd"/>
<path d="M46.500 24 C48 20 52 18 56 18.500 C52 20.500 49.500 23 48.500 27 Z" fill="#c99a6e"/>
<!-- eyes/brows -->
<path d="M35.500 39.300 C38.500 37.800 42 37.800 45 39.500" stroke="#94694a" stroke-width="1.400" fill="none"/>
<path d="M53.500 39.500 C56.500 37.800 60 37.800 63 39.300" stroke="#94694a" stroke-width="1.400" fill="none"/>
<ellipse cx="40.300" cy="43" rx="3.300" ry="1.700" fill="#3f5f73"/><ellipse cx="58" cy="43" rx="3.300" ry="1.700" fill="#3f5f73"/>
<ellipse cx="40.300" cy="43.200" rx="1.500" ry="1.300" fill="#6aa0bd"/><ellipse cx="58" cy="43.200" rx="1.500" ry="1.300" fill="#6aa0bd"/>
<!-- nose -->
<path d="M46.500 53.500 C48.500 55 51.500 55 53 53.500 C51.500 52 51 49 50.500 45 C49.500 49 48 52 46.500 53.500 Z" fill="#cc9272" opacity=".8"/>
<!-- cheeks -->
<ellipse cx="38" cy="53" rx="4.500" ry="3.500" fill="#e59f8a" opacity=".35"/><ellipse cx="61" cy="53" rx="4.500" ry="3.500" fill="#e59f8a" opacity=".35"/>
<!-- lips -->
<path d="M42.500 59.500 C46 57.800 52 57.800 56 59.500 C53 64 45.500 64 42.500 59.500 Z" fill="#c4686a"/>
<path d="M43.500 59.900 C47 60.600 52 60.600 55 59.900" stroke="#8f4044" stroke-width=".800" fill="none"/>
</g></g></svg>
<svg style="left:210.0px;top:534.0px;" width="80" height="80" viewBox="0 0 100 100"><defs><clipPath id="cp2"><circle cx="50" cy="50" r="50"/></clipPath><filter id="bl2" x="-10%" y="-10%" width="120%" height="120%"><feGaussianBlur stdDeviation="0.8"/></filter></defs><g clip-path="url(#cp2)"><g filter="url(#bl2)">
<defs><linearGradient id="cbg2" x1="0" y1="0" x2="1" y2="0"><stop offset="0" stop-color="#d0cfc7"/><stop offset=".5" stop-color="#c7c6be"/><stop offset="1" stop-color="#bdbcb4"/></linearGradient>
<radialGradient id="chr2" cx="45%" cy="45%" r="60%"><stop offset="0" stop-color="#74513b"/><stop offset="1" stop-color="#5c3f2f"/></radialGradient>
<linearGradient id="cfc2" x1="0" y1="0" x2="1" y2="1"><stop offset="0" stop-color="#e6c0a6"/><stop offset="1" stop-color="#d3a588"/></linearGradient></defs>
<rect width="100" height="100" fill="url(#cbg2)"/>
<!-- hair -->
<path d="M17 79 C14 66 14 52 18 43 C21 32 28 22 41 17 C52 13 64 15 70 24 C75 33 77 46 77 58 C79 70 79 79 73 85 L40 88 Z" fill="url(#chr2)"/>
<circle cx="18.2" cy="78.7" r="3.3" fill="#654633"/><circle cx="19.4" cy="75.8" r="3.3" fill="#654633"/><circle cx="19.2" cy="75.4" r="3.6" fill="#74523b"/><circle cx="16.2" cy="69.6" r="2.8" fill="#6a4a36"/><circle cx="15.6" cy="67.8" r="3.6" fill="#5e4030"/><circle cx="17.3" cy="66.3" r="3.6" fill="#6a4a36"/><circle cx="14.0" cy="55.1" r="2.9" fill="#654633"/><circle cx="15.4" cy="55.8" r="3.1" fill="#5e4030"/><circle cx="15.0" cy="57.6" r="3.6" fill="#654633"/><circle cx="16.6" cy="46.2" r="3.6" fill="#6a4a36"/><circle cx="16.3" cy="44.9" r="3.7" fill="#74523b"/><circle cx="17.3" cy="44.4" r="2.6" fill="#6a4a36"/><circle cx="20.5" cy="37.8" r="4.0" fill="#6a4a36"/><circle cx="22.7" cy="34.2" r="2.9" fill="#654633"/><circle cx="20.6" cy="34.3" r="4.2" fill="#5e4030"/><circle cx="26.1" cy="25.3" r="3.8" fill="#74523b"/><circle cx="26.6" cy="28.7" r="2.6" fill="#5e4030"/><circle cx="25.4" cy="25.2" r="3.0" fill="#654633"/><circle cx="35.2" cy="19.8" r="2.9" fill="#5e4030"/><circle cx="36.1" cy="19.7" r="4.2" fill="#654633"/><circle cx="34.7" cy="18.9" r="2.8" fill="#74523b"/><circle cx="46.9" cy="15.9" r="4.0" fill="#6a4a36"/><circle cx="44.6" cy="16.9" r="2.9" fill="#6a4a36"/><circle cx="43.6" cy="15.3" r="2.7" fill="#6a4a36"/><circle cx="55.3" cy="14.2" r="3.8" fill="#6a4a36"/><circle cx="54.8" cy="15.5" r="2.7" fill="#6a4a36"/><circle cx="55.5" cy="14.8" r="3.6" fill="#654633"/><circle cx="62.5" cy="17.5" r="3.9" fill="#5e4030"/><circle cx="62.9" cy="18.4" r="3.1" fill="#5e4030"/><circle cx="64.5" cy="18.2" r="2.9" fill="#654633"/><circle cx="70.4" cy="23.7" r="4.0" fill="#6a4a36"/><circle cx="70.0" cy="23.0" r="2.8" fill="#654633"/><circle cx="71.3" cy="24.4" r="3.0" fill="#74523b"/><circle cx="75.7" cy="34.9" r="3.4" fill="#5e4030"/><circle cx="74.2" cy="34.4" r="3.0" fill="#6a4a36"/><circle cx="75.7" cy="31.8" r="3.0" fill="#6a4a36"/><circle cx="75.6" cy="43.0" r="2.7" fill="#6a4a36"/><circle cx="75.5" cy="44.3" r="2.9" fill="#5e4030"/><circle cx="74.6" cy="43.8" r="2.7" fill="#74523b"/><circle cx="77.8" cy="55.3" r="3.7" fill="#5e4030"/><circle cx="78.7" cy="54.9" r="3.5" fill="#74523b"/><circle cx="78.9" cy="53.1" r="3.7" fill="#6a4a36"/><circle cx="78.9" cy="65.3" r="3.4" fill="#6a4a36"/><circle cx="78.2" cy="66.9" r="2.7" fill="#5e4030"/><circle cx="79.7" cy="65.4" r="3.9" fill="#654633"/><circle cx="78.5" cy="75.7" r="4.0" fill="#6a4a36"/><circle cx="77.3" cy="76.5" r="4.0" fill="#654633"/><circle cx="75.0" cy="74.3" r="3.2" fill="#6a4a36"/><circle cx="75.0" cy="84.5" r="3.6" fill="#74523b"/><circle cx="73.9" cy="83.3" r="3.2" fill="#654633"/><circle cx="73.2" cy="83.1" r="3.3" fill="#6a4a36"/><circle cx="26.0" cy="27.1" r="2.0" fill="#7d5840" opacity=".7"/><circle cx="31.4" cy="57.6" r="3.5" fill="#5a3d2d" opacity=".7"/><circle cx="43.0" cy="43.3" r="2.2" fill="#4f3628" opacity=".7"/><circle cx="22.9" cy="31.8" r="3.4" fill="#6f4e39" opacity=".7"/><circle cx="31.5" cy="36.0" r="2.6" fill="#5a3d2d" opacity=".7"/><circle cx="22.8" cy="47.0" r="3.3" fill="#88624a" opacity=".7"/><circle cx="42.5" cy="44.3" r="2.9" fill="#5a3d2d" opacity=".7"/><circle cx="23.1" cy="29.8" r="2.6" fill="#7d5840" opacity=".7"/><circle cx="37.6" cy="77.1" r="2.4" fill="#88624a" opacity=".7"/><circle cx="20.3" cy="49.3" r="3.5" fill="#6f4e39" opacity=".7"/><circle cx="28.1" cy="52.2" r="3.1" fill="#4f3628" opacity=".7"/><circle cx="30.1" cy="26.3" r="2.1" fill="#4f3628" opacity=".7"/><circle cx="18.2" cy="63.1" r="2.9" fill="#5a3d2d" opacity=".7"/><circle cx="35.8" cy="54.7" r="3.0" fill="#6f4e39" opacity=".7"/><circle cx="30.2" cy="23.4" r="3.3" fill="#88624a" opacity=".7"/><circle cx="39.6" cy="68.2" r="3.6" fill="#7d5840" opacity=".7"/><circle cx="29.9" cy="58.5" r="3.0" fill="#5a3d2d" opacity=".7"/><circle cx="44.8" cy="61.7" r="2.3" fill="#6f4e39" opacity=".7"/><circle cx="24.4" cy="63.4" r="3.2" fill="#4f3628" opacity=".7"/><circle cx="37.7" cy="32.4" r="2.4" fill="#5a3d2d" opacity=".7"/><circle cx="32.7" cy="76.9" r="2.8" fill="#88624a" opacity=".7"/><circle cx="28.4" cy="67.9" r="3.4" fill="#7d5840" opacity=".7"/><circle cx="28.9" cy="73.8" r="2.6" fill="#6f4e39" opacity=".7"/><circle cx="30.2" cy="58.3" r="3.5" fill="#6f4e39" opacity=".7"/><circle cx="33.0" cy="59.9" r="2.8" fill="#5a3d2d" opacity=".7"/><circle cx="30.4" cy="59.8" r="2.3" fill="#7d5840" opacity=".7"/><circle cx="23.2" cy="74.2" r="3.6" fill="#5a3d2d" opacity=".7"/><circle cx="32.6" cy="67.9" r="2.5" fill="#7d5840" opacity=".7"/><circle cx="27.1" cy="26.8" r="2.7" fill="#4f3628" opacity=".7"/><circle cx="29.2" cy="38.0" r="3.5" fill="#88624a" opacity=".7"/><circle cx="40.5" cy="25.7" r="3.3" fill="#88624a" opacity=".7"/><circle cx="32.5" cy="61.8" r="3.5" fill="#6f4e39" opacity=".7"/><circle cx="21.3" cy="52.0" r="3.2" fill="#6f4e39" opacity=".7"/><circle cx="44.4" cy="50.6" r="3.5" fill="#7d5840" opacity=".7"/><circle cx="39.0" cy="47.5" r="2.9" fill="#4f3628" opacity=".7"/><circle cx="35.5" cy="52.3" r="3.3" fill="#4f3628" opacity=".7"/><circle cx="24.4" cy="60.9" r="3.5" fill="#4f3628" opacity=".7"/><circle cx="23.0" cy="71.3" r="3.5" fill="#4f3628" opacity=".7"/><circle cx="24.9" cy="50.9" r="2.7" fill="#7d5840" opacity=".7"/><circle cx="31.6" cy="57.1" r="2.0" fill="#7d5840" opacity=".7"/><circle cx="32.0" cy="45.2" r="3.3" fill="#4f3628" opacity=".7"/><circle cx="20.5" cy="27.4" r="2.3" fill="#4f3628" opacity=".7"/><circle cx="30.3" cy="75.4" r="3.3" fill="#6f4e39" opacity=".7"/><circle cx="24.8" cy="49.4" r="2.2" fill="#6f4e39" opacity=".7"/><circle cx="43.1" cy="76.3" r="3.5" fill="#4f3628" opacity=".7"/><circle cx="26.2" cy="33.1" r="3.0" fill="#5a3d2d" opacity=".7"/><circle cx="20.8" cy="67.2" r="2.0" fill="#88624a" opacity=".7"/><circle cx="21.5" cy="22.7" r="2.5" fill="#5a3d2d" opacity=".7"/><circle cx="24.1" cy="50.9" r="2.8" fill="#4f3628" opacity=".7"/><circle cx="20.6" cy="51.6" r="2.4" fill="#88624a" opacity=".7"/><circle cx="74.6" cy="75.9" r="1.8" fill="#4f3628" opacity=".7"/><circle cx="75.6" cy="62.8" r="2.6" fill="#5a3d2d" opacity=".7"/><circle cx="73.2" cy="74.6" r="2.7" fill="#5a3d2d" opacity=".7"/><circle cx="70.9" cy="69.0" r="2.9" fill="#5a3d2d" opacity=".7"/><circle cx="71.5" cy="47.7" r="3.1" fill="#5a3d2d" opacity=".7"/><circle cx="75.2" cy="41.7" r="1.9" fill="#5a3d2d" opacity=".7"/><circle cx="70.1" cy="36.4" r="2.3" fill="#4f3628" opacity=".7"/><circle cx="75.7" cy="53.1" r="2.9" fill="#5a3d2d" opacity=".7"/><circle cx="70.6" cy="63.4" r="2.9" fill="#7d5840" opacity=".7"/><circle cx="70.6" cy="66.1" r="3.1" fill="#6f4e39" opacity=".7"/><circle cx="69.9" cy="57.3" r="2.9" fill="#5a3d2d" opacity=".7"/><circle cx="75.4" cy="56.1" r="1.8" fill="#4f3628" opacity=".7"/><circle cx="70.2" cy="41.2" r="2.1" fill="#5a3d2d" opacity=".7"/><circle cx="76.9" cy="78.3" r="1.9" fill="#7d5840" opacity=".7"/><circle cx="70.1" cy="66.0" r="1.9" fill="#7d5840" opacity=".7"/><circle cx="71.6" cy="55.3" r="2.5" fill="#4f3628" opacity=".7"/><circle cx="70.7" cy="50.7" r="2.7" fill="#7d5840" opacity=".7"/><circle cx="75.8" cy="41.1" r="2.4" fill="#6f4e39" opacity=".7"/><circle cx="72.2" cy="41.8" r="2.0" fill="#7d5840" opacity=".7"/><circle cx="71.6" cy="36.2" r="3.0" fill="#4f3628" opacity=".7"/>
<!-- right shoulder jacket -->
<path d="M64 78 L88 79 L84 92 L60 100 Z" fill="#b98f6a"/>
<!-- neck -->
<path d="M44 62 H62 L64 80 L50 86 Z" fill="#cda084"/>
<!-- shirt -->
<path d="M41 72 L56 85 L62 76 L72 90 L66 101 H44 Z" fill="#ecd384"/>
<path d="M50 80 L57 86 L54 100 H48 Z" fill="#dcbd68" opacity=".8"/>
<!-- jacket -->
<path d="M12 81 L33.500 71.500 L40.500 67 L47 83 L50 101 H20 C17 95 14 89 12 81 Z" fill="#c89e77"/>
<path d="M38 70 L41 67 L47 90 L44 92 Z" fill="#8c5e3e"/>
<!-- face -->
<path d="M43.500 42 C43.500 30 50 24 58.500 24 C67.500 24 73 30 73 42 C73 52 71 60 67 65.500 C63 70 56 70 52 65.500 C47 60 43.500 52 43.500 42 Z" fill="url(#cfc2)"/>
<path d="M43.500 38 C44 29 51 23 60 24 C55 26 49 30 45.500 38 Z" fill="#684733"/>
<path d="M73.500 40 C74 31 69 25 60 24 C66 26 70 31 72 40 Z" fill="#5c3f2f"/>
<circle cx="45" cy="48" r="3.200" fill="#6a4a36"/><circle cx="44" cy="55" r="3" fill="#5e4030"/><circle cx="46" cy="62" r="3" fill="#6a4a36"/><circle cx="72.500" cy="50" r="2.600" fill="#5e4030"/><circle cx="72" cy="58" r="2.600" fill="#654633"/>
<!-- glasses -->
<g fill="rgba(255,255,255,.10)" stroke="#56554f" stroke-width="1.400"><ellipse cx="53" cy="45" rx="6" ry="5.600"/><ellipse cx="66.500" cy="46.500" rx="5.200" ry="5.400"/></g>
<path d="M59 44.500 C60 43.800 61 44 61.400 45" stroke="#56554f" stroke-width="1.200" fill="none"/>
<ellipse cx="53.300" cy="45.200" rx="1.900" ry="1" fill="#4a3a30"/><ellipse cx="66" cy="46.700" rx="1.700" ry="1" fill="#4a3a30"/>
<path d="M48.500 41 C51 39.800 55 39.800 57.500 41" stroke="#5c3f2f" stroke-width="1.100" fill="none"/><path d="M62.500 42 C65 41 68 41.300 70 42.500" stroke="#5c3f2f" stroke-width="1.100" fill="none"/>
<!-- nose/lips -->
<path d="M58 55 C60 56 62 56 63.500 55 C62.500 53 62 50 61.500 47.500 C60.500 51 59 53.500 58 55 Z" fill="#c48f73" opacity=".8"/>
<path d="M54 59.200 C57 58.200 61 58.200 64 59.400 C61.500 62.200 56.500 62.200 54 59.200 Z" fill="#b56f68"/>
</g></g><circle cx="50" cy="50" r="48.75" fill="none" stroke="#b4b4b4" stroke-width="2.50"/></svg>
<svg style="left:210.0px;top:736.0px;" width="48" height="48" viewBox="0 0 100 100"><defs><clipPath id="cp3"><circle cx="50" cy="50" r="50"/></clipPath><filter id="bl3" x="-10%" y="-10%" width="120%" height="120%"><feGaussianBlur stdDeviation="0.9"/></filter></defs><g clip-path="url(#cp3)"><g filter="url(#bl3)">
<defs><radialGradient id="ehr3" cx="50%" cy="42%" r="58%"><stop offset="0" stop-color="#dcae84"/><stop offset=".55" stop-color="#e6c19b"/><stop offset="1" stop-color="#efd8bf"/></radialGradient>
<linearGradient id="efc3" x1="0" y1="0" x2="0" y2="1"><stop offset="0" stop-color="#f1cdb4"/><stop offset=".6" stop-color="#ebbfa4"/><stop offset="1" stop-color="#dba78a"/></linearGradient>
<filter id="esoft3" x="-20%" y="-20%" width="140%" height="140%"><feGaussianBlur stdDeviation="1.300"/></filter></defs>
<rect width="100" height="100" fill="#fff"/>
<path d="M60 4 C76 6 92 20 97 42 L102 20 V-2 H60 Z" fill="#fdeee6"/>
<!-- hair mass -->
<path d="M44 6 C54 3.500 66 8 73 15 C83 23 88 38 91 54 C93 66 97 76 93 86 C90 94 84 98 78 101 L24 101 C16 96 9 86 8 73 C7.500 58 12 45 17 35 C21 24 30 9.500 44 6 Z" fill="url(#ehr3)"/>
<g filter="url(#esoft3)" fill="none" stroke-linecap="round">
<path d="M22 36 C15 52 12 68 17 88" stroke="#f7ebdc" stroke-width="5"/>
<path d="M82 38 C88 54 90 70 85 90" stroke="#f4e2cd" stroke-width="5"/>
<path d="M31 30 C25 46 22 62 27 84" stroke="#d09c70" stroke-width="4"/>
<path d="M72 30 C78 46 79 64 73 86" stroke="#cf9a6f" stroke-width="4"/>
<path d="M28 58 C24 70 26 84 32 98" stroke="#eed5b8" stroke-width="4"/>
<path d="M76 58 C80 70 78 86 72 98" stroke="#ecd0b2" stroke-width="4"/>
<path d="M40 12 C34 18 30 26 28 34" stroke="#f3e2cc" stroke-width="4"/>
<path d="M62 12 C70 18 75 26 77 36" stroke="#d6a57a" stroke-width="4"/>
<path d="M88 60 C92 70 93 80 90 88" stroke="#c98f68" stroke-width="3" opacity=".8"/>
<path d="M11 70 C11 80 14 88 20 94" stroke="#d7a67c" stroke-width="3" opacity=".8"/>
</g>
<!-- clothes -->
<path d="M30 92 L36 78 L50 93 L64 76 L72 90 L76 102 H26 Z" fill="#33444e"/>
<path d="M42 93 L50 91 L60 93 L62 102 H40 Z" fill="#10161a"/>
<path d="M12 86 C16 81 22 81 26 85 L25 94 L16 93 Z" fill="#6a4a50" opacity=".9"/>
<path d="M80 82 C85 80 90 82 92 86 L88 93 L80 90 Z" fill="#75605e" opacity=".8"/>
<!-- neck -->
<path d="M40 64 H60 L62 79 L50 92 L38 79 Z" fill="#dfad90"/>
<path d="M40 66 C44 72 56 72 60 66 L60 70 C56 76 44 76 40 70 Z" fill="#c99274" opacity=".6"/>
<!-- hair over shoulders -->
<g filter="url(#esoft3)"><path d="M28 62 C26 74 28 88 34 100 L24 100 C18 90 18 76 22 64 Z" fill="#e3bc96"/>
<path d="M70 62 C74 76 72 90 66 100 L78 100 C84 90 82 76 78 64 Z" fill="#e0b68e"/></g>
<!-- face -->
<ellipse cx="49.500" cy="49" rx="17.300" ry="22" fill="url(#efc3)"/>
<!-- fringe hair over forehead -->
<path d="M31.500 48 C30 34 36 23 47 19.500 C42 26 38 34 36 46 Z" fill="#e0b78f"/>
<path d="M67.500 48 C69 34 62 23 50 19.500 C56 26 62 34 63.500 46 Z" fill="#dcae84"/>
<path d="M38 11 C45 7 58 9 65 18 C58 16 50 18 46.500 24 C44 20 41 15 38 11 Z" fill="#efd9bd"/>
<path d="M46.500 24 C48 20 52 18 56 18.500 C52 20.500 49.500 23 48.500 27 Z" fill="#c99a6e"/>
<!-- eyes/brows -->
<path d="M35.500 39.300 C38.500 37.800 42 37.800 45 39.500" stroke="#94694a" stroke-width="1.400" fill="none"/>
<path d="M53.500 39.500 C56.500 37.800 60 37.800 63 39.300" stroke="#94694a" stroke-width="1.400" fill="none"/>
<ellipse cx="40.300" cy="43" rx="3.300" ry="1.700" fill="#3f5f73"/><ellipse cx="58" cy="43" rx="3.300" ry="1.700" fill="#3f5f73"/>
<ellipse cx="40.300" cy="43.200" rx="1.500" ry="1.300" fill="#6aa0bd"/><ellipse cx="58" cy="43.200" rx="1.500" ry="1.300" fill="#6aa0bd"/>
<!-- nose -->
<path d="M46.500 53.500 C48.500 55 51.500 55 53 53.500 C51.500 52 51 49 50.500 45 C49.500 49 48 52 46.500 53.500 Z" fill="#cc9272" opacity=".8"/>
<!-- cheeks -->
<ellipse cx="38" cy="53" rx="4.500" ry="3.500" fill="#e59f8a" opacity=".35"/><ellipse cx="61" cy="53" rx="4.500" ry="3.500" fill="#e59f8a" opacity=".35"/>
<!-- lips -->
<path d="M42.500 59.500 C46 57.800 52 57.800 56 59.500 C53 64 45.500 64 42.500 59.500 Z" fill="#c4686a"/>
<path d="M43.500 59.900 C47 60.600 52 60.600 55 59.900" stroke="#8f4044" stroke-width=".800" fill="none"/>
</g></g><circle cx="50" cy="50" r="47.92" fill="none" stroke="#b4b4b4" stroke-width="4.17"/></svg>
<svg style="left:848.0px;top:534.0px;" width="80" height="80" viewBox="0 0 100 100"><defs><clipPath id="cp4"><circle cx="50" cy="50" r="50"/></clipPath><filter id="bl4" x="-10%" y="-10%" width="120%" height="120%"><feGaussianBlur stdDeviation="0.7"/></filter></defs><g clip-path="url(#cp4)"><g filter="url(#bl4)">
<defs><linearGradient id="dbg4" x1="0" y1="0" x2="1" y2="0"><stop offset="0" stop-color="#a69d8c"/><stop offset=".10" stop-color="#948b7b"/><stop offset=".20" stop-color="#837a6c"/><stop offset=".30" stop-color="#877e6f"/><stop offset=".345" stop-color="#b9b1a0"/><stop offset=".39" stop-color="#dbd6c6"/><stop offset=".45" stop-color="#e9e6d8"/><stop offset=".55" stop-color="#f8f8ee"/><stop offset="1" stop-color="#fcfcf5"/></linearGradient>
<linearGradient id="dfc4" x1="0" y1="0" x2="0" y2="1"><stop offset="0" stop-color="#ecc6a6"/><stop offset=".30" stop-color="#e2b090"/><stop offset=".55" stop-color="#d89b7a"/><stop offset=".75" stop-color="#c98a67"/><stop offset="1" stop-color="#bd805c"/></linearGradient>
<linearGradient id="dhr4" x1="0" y1="0" x2="1" y2="0"><stop offset="0" stop-color="#ead8b0"/><stop offset=".30" stop-color="#d5b786"/><stop offset=".65" stop-color="#c19b69"/><stop offset="1" stop-color="#a88253"/></linearGradient>
<radialGradient id="dck4" cx="50%" cy="50%" r="50%"><stop offset="0" stop-color="#d98a6e" stop-opacity=".55"/><stop offset="1" stop-color="#d98a6e" stop-opacity="0"/></radialGradient>
<filter id="dsoft4" x="-20%" y="-20%" width="140%" height="140%"><feGaussianBlur stdDeviation="2.200"/></filter>
<filter id="dmid4" x="-20%" y="-20%" width="140%" height="140%"><feGaussianBlur stdDeviation="1.100"/></filter></defs>
<rect width="100" height="100" fill="url(#dbg4)"/>
<g filter="url(#dsoft4)">
<rect x="6" y="42" width="26" height="60" fill="#776e60" opacity=".75"/>
<rect x="-4" y="-4" width="16" height="60" fill="#b0a795" opacity=".6"/>
<path d="M78 36 L96 40 L102 84 L82 76 Z" fill="#ccd0bf"/>
<path d="M86 44 L92 46 L97 78 L90 74 Z" fill="#eef0e4"/>
<rect x="44" y="-4" width="60" height="30" fill="#fdfdf6"/>
</g>
<!-- suit -->
<path d="M12 93 L32.600 77.500 L50 86 L72.400 75.200 L90 88 L104 98 V104 H-4 Z" fill="#2c3767"/>
<path d="M14 94 L30 82 L33 100 H10 Z" fill="#222c55" opacity=".6"/>
<!-- shirt -->
<path d="M32.600 77.500 L38 70 L66 69 L72.400 75.200 L63.500 100 H30 Z" fill="#e3e9f0"/>
<path d="M32.600 77.500 L43.500 91 L50 85 L57.500 90.500 L72.400 75.200 L66 71 L50 82 L38 71.500 Z" fill="#f3f6f9"/>
<path d="M50 85 L43.500 91 L41 100 H47 Z" fill="#cfd6e0" opacity=".7"/>
<!-- tie -->
<path d="M42.500 90.800 L50 88.500 L52.500 92 L52 101 H38.500 Z" fill="#202a50"/>
<!-- neck -->
<path d="M37 64 H66 V73 L51 82 L38 73 Z" fill="#c38b67"/>
<!-- ears -->
<ellipse cx="27" cy="48.500" rx="3.300" ry="7" fill="#dca488"/>
<ellipse cx="76.600" cy="47" rx="3.600" ry="7.600" fill="#d89c7e"/>
<ellipse cx="76.600" cy="47.500" rx="1.600" ry="4.500" fill="#c9856a" opacity=".7"/>
<!-- hair back -->
<path d="M25 38 C23.500 27 28 18 35 12.500 C43 6.500 58 5.500 66.500 11.500 C74.500 17 78 27 76.800 38 C74.500 30 70 25 62 22 C52 19 40 20 33.500 25 C29 29 27 33 25 38 Z" fill="url(#dhr4)"/>
<!-- face -->
<path d="M27.300 40 C27 27 36 17 50 17 C66 17 75.500 26.500 75.500 40 C75.500 51 73.500 61 68.500 68.500 C63.500 75 56.500 78.300 51.500 78.300 C45.500 78.300 39 75 34.500 69 C29.500 62 27.500 51 27.300 40 Z" fill="url(#dfc4)"/>
<!-- forehead hair sweep -->
<path d="M27.500 35 C28 26 32 19.500 38 16 C44 12.500 54 12.500 60 15 C52 15.500 43 18 38 23 C33.500 27 30 32 27.500 35 Z" fill="#e4d1a6"/>
<path d="M46 13.500 C58 11 70 17 74.500 30 C75.500 33 76 36 76 38.500 C73.500 31 69 24.500 61 21 C56 18.500 50 16.500 46 13.500 Z" fill="#bd9865"/>
<path d="M34 13 C42 7 58 6 66.500 12 C60 10 48 10 40 14 C36 16 32 20 29.500 25 C30 20 31.500 16 34 13 Z" fill="#cfb07e"/>
<!-- shading -->
<g filter="url(#dmid4)">
<ellipse cx="36" cy="53" rx="6.500" ry="5" fill="url(#dck4)"/><ellipse cx="65.500" cy="52" rx="6.500" ry="5" fill="url(#dck4)"/>
<path d="M30 55 C33 61 37 63.500 43 61 C48 58 55 58 60 60.500 C65.500 63 70.500 60 73 53 C72.500 62 69 69.500 63.500 74 C58 78 45 78 39.500 73.500 C34 69.500 30.500 62.500 30 55 Z" fill="#b37350" opacity=".85"/>
<ellipse cx="50" cy="27" rx="12" ry="5" fill="#f3d6ba" opacity=".4"/>
<path d="M29 38 C33 34.500 42 34.500 47 37 L47 41 C42 39 34 39 29 42 Z" fill="#c08e6e" opacity=".45"/>
<path d="M53 36 C58 33.500 66 33.500 70 36 L70 40.500 C66 38 58 38 53 40 Z" fill="#c08e6e" opacity=".45"/>
</g>
<!-- mouth -->
<path d="M40 58.900 C46 60.800 54 60 59.300 57 C57.500 63.500 52 66 48 65.600 C44 65.200 41 62.500 40 58.900 Z" fill="#8a463b"/>
<path d="M41.600 59.700 C46.800 61.300 53.600 60.700 58 58.300 C56 62 51.500 63.300 48.200 63 C45.200 62.800 42.800 61.600 41.600 59.700 Z" fill="#f4ecc8"/>
<!-- nose -->
<path d="M43.500 51.600 C46 53.800 52 53.800 55 51 C53 49.500 51.300 47 50.600 43 C49.500 47.500 46 49.500 43.500 51.600 Z" fill="#c88866" opacity=".75"/>
<path d="M45.500 52.300 C47.500 53.300 51 53.300 53 52" stroke="#9c5f48" stroke-width=".900" fill="none" opacity=".8"/>
<!-- eyes -->
<ellipse cx="37.200" cy="40.800" rx="3.100" ry="1.300" fill="#57504a"/><ellipse cx="58.800" cy="39.300" rx="3.100" ry="1.300" fill="#57504a"/>
<path d="M31 36.800 C35 35 40 35 44.500 36.600" stroke="#b18d60" stroke-width="1.500" fill="none"/><path d="M54 35.800 C58.500 34 63.500 34 68 35.400" stroke="#b18d60" stroke-width="1.500" fill="none"/>
<!-- glasses -->
<g fill="rgba(255,255,255,.08)" stroke="#3b4157" stroke-width="1.700" stroke-linejoin="round">
<path d="M27.300 37 L48.400 36.200 Q49.400 36.200 49.300 37.400 L48.300 43.600 Q47.800 46.200 45.200 46.500 L34.300 47.700 Q31.500 47.900 30.600 45.200 L27.300 37 Z"/>
<path d="M51.400 36.100 L69.200 35.100 Q69.600 35.100 69.500 36 L67.800 43.400 Q67.200 45.600 65 45.900 L56.800 47 Q54.200 47.200 53.600 44.800 L51.400 36.100 Z"/></g>
<path d="M26.500 36.300 L49 35.500 M51 35.400 L69.800 34.300" stroke="#3b4157" stroke-width="2.400" fill="none" stroke-linecap="round"/>
<path d="M49 37.200 C49.800 36.500 50.600 36.500 51.400 37" stroke="#3b4157" stroke-width="1.700" fill="none"/>
<path d="M69.600 35.200 L75.800 38.300" stroke="#3b4157" stroke-width="1.400" fill="none"/>
</g></g><circle cx="50" cy="50" r="48.75" fill="none" stroke="#b4b4b4" stroke-width="2.50"/></svg>
<svg style="left:847.8px;top:663.7px;" width="48" height="48" viewBox="0 0 100 100"><defs><clipPath id="cp5"><circle cx="50" cy="50" r="50"/></clipPath><filter id="bl5" x="-10%" y="-10%" width="120%" height="120%"><feGaussianBlur stdDeviation="0.9"/></filter></defs><g clip-path="url(#cp5)"><g filter="url(#bl5)">
<defs><radialGradient id="ehr5" cx="50%" cy="42%" r="58%"><stop offset="0" stop-color="#dcae84"/><stop offset=".55" stop-color="#e6c19b"/><stop offset="1" stop-color="#efd8bf"/></radialGradient>
<linearGradient id="efc5" x1="0" y1="0" x2="0" y2="1"><stop offset="0" stop-color="#f1cdb4"/><stop offset=".6" stop-color="#ebbfa4"/><stop offset="1" stop-color="#dba78a"/></linearGradient>
<filter id="esoft5" x="-20%" y="-20%" width="140%" height="140%"><feGaussianBlur stdDeviation="1.300"/></filter></defs>
<rect width="100" height="100" fill="#fff"/>
<path d="M60 4 C76 6 92 20 97 42 L102 20 V-2 H60 Z" fill="#fdeee6"/>
<!-- hair mass -->
<path d="M44 6 C54 3.500 66 8 73 15 C83 23 88 38 91 54 C93 66 97 76 93 86 C90 94 84 98 78 101 L24 101 C16 96 9 86 8 73 C7.500 58 12 45 17 35 C21 24 30 9.500 44 6 Z" fill="url(#ehr5)"/>
<g filter="url(#esoft5)" fill="none" stroke-linecap="round">
<path d="M22 36 C15 52 12 68 17 88" stroke="#f7ebdc" stroke-width="5"/>
<path d="M82 38 C88 54 90 70 85 90" stroke="#f4e2cd" stroke-width="5"/>
<path d="M31 30 C25 46 22 62 27 84" stroke="#d09c70" stroke-width="4"/>
<path d="M72 30 C78 46 79 64 73 86" stroke="#cf9a6f" stroke-width="4"/>
<path d="M28 58 C24 70 26 84 32 98" stroke="#eed5b8" stroke-width="4"/>
<path d="M76 58 C80 70 78 86 72 98" stroke="#ecd0b2" stroke-width="4"/>
<path d="M40 12 C34 18 30 26 28 34" stroke="#f3e2cc" stroke-width="4"/>
<path d="M62 12 C70 18 75 26 77 36" stroke="#d6a57a" stroke-width="4"/>
<path d="M88 60 C92 70 93 80 90 88" stroke="#c98f68" stroke-width="3" opacity=".8"/>
<path d="M11 70 C11 80 14 88 20 94" stroke="#d7a67c" stroke-width="3" opacity=".8"/>
</g>
<!-- clothes -->
<path d="M30 92 L36 78 L50 93 L64 76 L72 90 L76 102 H26 Z" fill="#33444e"/>
<path d="M42 93 L50 91 L60 93 L62 102 H40 Z" fill="#10161a"/>
<path d="M12 86 C16 81 22 81 26 85 L25 94 L16 93 Z" fill="#6a4a50" opacity=".9"/>
<path d="M80 82 C85 80 90 82 92 86 L88 93 L80 90 Z" fill="#75605e" opacity=".8"/>
<!-- neck -->
<path d="M40 64 H60 L62 79 L50 92 L38 79 Z" fill="#dfad90"/>
<path d="M40 66 C44 72 56 72 60 66 L60 70 C56 76 44 76 40 70 Z" fill="#c99274" opacity=".6"/>
<!-- hair over shoulders -->
<g filter="url(#esoft5)"><path d="M28 62 C26 74 28 88 34 100 L24 100 C18 90 18 76 22 64 Z" fill="#e3bc96"/>
<path d="M70 62 C74 76 72 90 66 100 L78 100 C84 90 82 76 78 64 Z" fill="#e0b68e"/></g>
<!-- face -->
<ellipse cx="49.500" cy="49" rx="17.300" ry="22" fill="url(#efc5)"/>
<!-- fringe hair over forehead -->
<path d="M31.500 48 C30 34 36 23 47 19.500 C42 26 38 34 36 46 Z" fill="#e0b78f"/>
<path d="M67.500 48 C69 34 62 23 50 19.500 C56 26 62 34 63.500 46 Z" fill="#dcae84"/>
<path d="M38 11 C45 7 58 9 65 18 C58 16 50 18 46.500 24 C44 20 41 15 38 11 Z" fill="#efd9bd"/>
<path d="M46.500 24 C48 20 52 18 56 18.500 C52 20.500 49.500 23 48.500 27 Z" fill="#c99a6e"/>
<!-- eyes/brows -->
<path d="M35.500 39.300 C38.500 37.800 42 37.800 45 39.500" stroke="#94694a" stroke-width="1.400" fill="none"/>
<path d="M53.500 39.500 C56.500 37.800 60 37.800 63 39.300" stroke="#94694a" stroke-width="1.400" fill="none"/>
<ellipse cx="40.300" cy="43" rx="3.300" ry="1.700" fill="#3f5f73"/><ellipse cx="58" cy="43" rx="3.300" ry="1.700" fill="#3f5f73"/>
<ellipse cx="40.300" cy="43.200" rx="1.500" ry="1.300" fill="#6aa0bd"/><ellipse cx="58" cy="43.200" rx="1.500" ry="1.300" fill="#6aa0bd"/>
<!-- nose -->
<path d="M46.500 53.500 C48.500 55 51.500 55 53 53.500 C51.500 52 51 49 50.500 45 C49.500 49 48 52 46.500 53.500 Z" fill="#cc9272" opacity=".8"/>
<!-- cheeks -->
<ellipse cx="38" cy="53" rx="4.500" ry="3.500" fill="#e59f8a" opacity=".35"/><ellipse cx="61" cy="53" rx="4.500" ry="3.500" fill="#e59f8a" opacity=".35"/>
<!-- lips -->
<path d="M42.500 59.500 C46 57.800 52 57.800 56 59.500 C53 64 45.500 64 42.500 59.500 Z" fill="#c4686a"/>
<path d="M43.500 59.900 C47 60.600 52 60.600 55 59.900" stroke="#8f4044" stroke-width=".800" fill="none"/>
</g></g><circle cx="50" cy="50" r="47.92" fill="none" stroke="#b4b4b4" stroke-width="4.17"/></svg>
<svg style="left:2088.0px;top:274.0px;" width="256" height="256" viewBox="0 0 100 100"><defs><clipPath id="cp6"><circle cx="50" cy="50" r="50"/></clipPath><filter id="bl6" x="-10%" y="-10%" width="120%" height="120%"><feGaussianBlur stdDeviation="0.35"/></filter></defs><g clip-path="url(#cp6)"><g filter="url(#bl6)">
<defs><linearGradient id="dbg6" x1="0" y1="0" x2="1" y2="0"><stop offset="0" stop-color="#a69d8c"/><stop offset=".10" stop-color="#948b7b"/><stop offset=".20" stop-color="#837a6c"/><stop offset=".30" stop-color="#877e6f"/><stop offset=".345" stop-color="#b9b1a0"/><stop offset=".39" stop-color="#dbd6c6"/><stop offset=".45" stop-color="#e9e6d8"/><stop offset=".55" stop-color="#f8f8ee"/><stop offset="1" stop-color="#fcfcf5"/></linearGradient>
<linearGradient id="dfc6" x1="0" y1="0" x2="0" y2="1"><stop offset="0" stop-color="#ecc6a6"/><stop offset=".30" stop-color="#e2b090"/><stop offset=".55" stop-color="#d89b7a"/><stop offset=".75" stop-color="#c98a67"/><stop offset="1" stop-color="#bd805c"/></linearGradient>
<linearGradient id="dhr6" x1="0" y1="0" x2="1" y2="0"><stop offset="0" stop-color="#ead8b0"/><stop offset=".30" stop-color="#d5b786"/><stop offset=".65" stop-color="#c19b69"/><stop offset="1" stop-color="#a88253"/></linearGradient>
<radialGradient id="dck6" cx="50%" cy="50%" r="50%"><stop offset="0" stop-color="#d98a6e" stop-opacity=".55"/><stop offset="1" stop-color="#d98a6e" stop-opacity="0"/></radialGradient>
<filter id="dsoft6" x="-20%" y="-20%" width="140%" height="140%"><feGaussianBlur stdDeviation="2.200"/></filter>
<filter id="dmid6" x="-20%" y="-20%" width="140%" height="140%"><feGaussianBlur stdDeviation="1.100"/></filter></defs>
<rect width="100" height="100" fill="url(#dbg6)"/>
<g filter="url(#dsoft6)">
<rect x="6" y="42" width="26" height="60" fill="#776e60" opacity=".75"/>
<rect x="-4" y="-4" width="16" height="60" fill="#b0a795" opacity=".6"/>
<path d="M78 36 L96 40 L102 84 L82 76 Z" fill="#ccd0bf"/>
<path d="M86 44 L92 46 L97 78 L90 74 Z" fill="#eef0e4"/>
<rect x="44" y="-4" width="60" height="30" fill="#fdfdf6"/>
</g>
<!-- suit -->
<path d="M12 93 L32.600 77.500 L50 86 L72.400 75.200 L90 88 L104 98 V104 H-4 Z" fill="#2c3767"/>
<path d="M14 94 L30 82 L33 100 H10 Z" fill="#222c55" opacity=".6"/>
<!-- shirt -->
<path d="M32.600 77.500 L38 70 L66 69 L72.400 75.200 L63.500 100 H30 Z" fill="#e3e9f0"/>
<path d="M32.600 77.500 L43.500 91 L50 85 L57.500 90.500 L72.400 75.200 L66 71 L50 82 L38 71.500 Z" fill="#f3f6f9"/>
<path d="M50 85 L43.500 91 L41 100 H47 Z" fill="#cfd6e0" opacity=".7"/>
<!-- tie -->
<path d="M42.500 90.800 L50 88.500 L52.500 92 L52 101 H38.500 Z" fill="#202a50"/>
<!-- neck -->
<path d="M37 64 H66 V73 L51 82 L38 73 Z" fill="#c38b67"/>
<!-- ears -->
<ellipse cx="27" cy="48.500" rx="3.300" ry="7" fill="#dca488"/>
<ellipse cx="76.600" cy="47" rx="3.600" ry="7.600" fill="#d89c7e"/>
<ellipse cx="76.600" cy="47.500" rx="1.600" ry="4.500" fill="#c9856a" opacity=".7"/>
<!-- hair back -->
<path d="M25 38 C23.500 27 28 18 35 12.500 C43 6.500 58 5.500 66.500 11.500 C74.500 17 78 27 76.800 38 C74.500 30 70 25 62 22 C52 19 40 20 33.500 25 C29 29 27 33 25 38 Z" fill="url(#dhr6)"/>
<!-- face -->
<path d="M27.300 40 C27 27 36 17 50 17 C66 17 75.500 26.500 75.500 40 C75.500 51 73.500 61 68.500 68.500 C63.500 75 56.500 78.300 51.500 78.300 C45.500 78.300 39 75 34.500 69 C29.500 62 27.500 51 27.300 40 Z" fill="url(#dfc6)"/>
<!-- forehead hair sweep -->
<path d="M27.500 35 C28 26 32 19.500 38 16 C44 12.500 54 12.500 60 15 C52 15.500 43 18 38 23 C33.500 27 30 32 27.500 35 Z" fill="#e4d1a6"/>
<path d="M46 13.500 C58 11 70 17 74.500 30 C75.500 33 76 36 76 38.500 C73.500 31 69 24.500 61 21 C56 18.500 50 16.500 46 13.500 Z" fill="#bd9865"/>
<path d="M34 13 C42 7 58 6 66.500 12 C60 10 48 10 40 14 C36 16 32 20 29.500 25 C30 20 31.500 16 34 13 Z" fill="#cfb07e"/>
<!-- shading -->
<g filter="url(#dmid6)">
<ellipse cx="36" cy="53" rx="6.500" ry="5" fill="url(#dck6)"/><ellipse cx="65.500" cy="52" rx="6.500" ry="5" fill="url(#dck6)"/>
<path d="M30 55 C33 61 37 63.500 43 61 C48 58 55 58 60 60.500 C65.500 63 70.500 60 73 53 C72.500 62 69 69.500 63.500 74 C58 78 45 78 39.500 73.500 C34 69.500 30.500 62.500 30 55 Z" fill="#b37350" opacity=".85"/>
<ellipse cx="50" cy="27" rx="12" ry="5" fill="#f3d6ba" opacity=".4"/>
<path d="M29 38 C33 34.500 42 34.500 47 37 L47 41 C42 39 34 39 29 42 Z" fill="#c08e6e" opacity=".45"/>
<path d="M53 36 C58 33.500 66 33.500 70 36 L70 40.500 C66 38 58 38 53 40 Z" fill="#c08e6e" opacity=".45"/>
</g>
<!-- mouth -->
<path d="M40 58.900 C46 60.800 54 60 59.300 57 C57.500 63.500 52 66 48 65.600 C44 65.200 41 62.500 40 58.900 Z" fill="#8a463b"/>
<path d="M41.600 59.700 C46.800 61.300 53.600 60.700 58 58.300 C56 62 51.500 63.300 48.200 63 C45.200 62.800 42.800 61.600 41.600 59.700 Z" fill="#f4ecc8"/>
<!-- nose -->
<path d="M43.500 51.600 C46 53.800 52 53.800 55 51 C53 49.500 51.300 47 50.600 43 C49.500 47.500 46 49.500 43.500 51.600 Z" fill="#c88866" opacity=".75"/>
<path d="M45.500 52.300 C47.500 53.300 51 53.300 53 52" stroke="#9c5f48" stroke-width=".900" fill="none" opacity=".8"/>
<!-- eyes -->
<ellipse cx="37.200" cy="40.800" rx="3.100" ry="1.300" fill="#57504a"/><ellipse cx="58.800" cy="39.300" rx="3.100" ry="1.300" fill="#57504a"/>
<path d="M31 36.800 C35 35 40 35 44.500 36.600" stroke="#b18d60" stroke-width="1.500" fill="none"/><path d="M54 35.800 C58.500 34 63.500 34 68 35.400" stroke="#b18d60" stroke-width="1.500" fill="none"/>
<!-- glasses -->
<g fill="rgba(255,255,255,.08)" stroke="#3b4157" stroke-width="1.700" stroke-linejoin="round">
<path d="M27.300 37 L48.400 36.200 Q49.400 36.200 49.300 37.400 L48.300 43.600 Q47.800 46.200 45.200 46.500 L34.300 47.700 Q31.500 47.900 30.600 45.200 L27.300 37 Z"/>
<path d="M51.400 36.100 L69.200 35.100 Q69.600 35.100 69.500 36 L67.800 43.400 Q67.200 45.600 65 45.900 L56.800 47 Q54.200 47.200 53.600 44.800 L51.400 36.100 Z"/></g>
<path d="M26.500 36.300 L49 35.500 M51 35.400 L69.800 34.300" stroke="#3b4157" stroke-width="2.400" fill="none" stroke-linecap="round"/>
<path d="M49 37.200 C49.800 36.500 50.600 36.500 51.400 37" stroke="#3b4157" stroke-width="1.700" fill="none"/>
<path d="M69.600 35.200 L75.800 38.300" stroke="#3b4157" stroke-width="1.400" fill="none"/>
</g></g><circle cx="50" cy="50" r="49.71" fill="none" stroke="#e6e2da" stroke-width="0.59"/></svg>
<svg style="left:1980.1px;top:1262.1999999999998px;" width="55.8" height="55.8" viewBox="0 0 100 100"><defs><clipPath id="cp7"><circle cx="50" cy="50" r="50"/></clipPath><filter id="bl7" x="-10%" y="-10%" width="120%" height="120%"><feGaussianBlur stdDeviation="0.9"/></filter></defs><g clip-path="url(#cp7)"><g filter="url(#bl7)">
<defs><radialGradient id="ehr7" cx="50%" cy="42%" r="58%"><stop offset="0" stop-color="#dcae84"/><stop offset=".55" stop-color="#e6c19b"/><stop offset="1" stop-color="#efd8bf"/></radialGradient>
<linearGradient id="efc7" x1="0" y1="0" x2="0" y2="1"><stop offset="0" stop-color="#f1cdb4"/><stop offset=".6" stop-color="#ebbfa4"/><stop offset="1" stop-color="#dba78a"/></linearGradient>
<filter id="esoft7" x="-20%" y="-20%" width="140%" height="140%"><feGaussianBlur stdDeviation="1.300"/></filter></defs>
<rect width="100" height="100" fill="#fff"/>
<path d="M60 4 C76 6 92 20 97 42 L102 20 V-2 H60 Z" fill="#fdeee6"/>
<!-- hair mass -->
<path d="M44 6 C54 3.500 66 8 73 15 C83 23 88 38 91 54 C93 66 97 76 93 86 C90 94 84 98 78 101 L24 101 C16 96 9 86 8 73 C7.500 58 12 45 17 35 C21 24 30 9.500 44 6 Z" fill="url(#ehr7)"/>
<g filter="url(#esoft7)" fill="none" stroke-linecap="round">
<path d="M22 36 C15 52 12 68 17 88" stroke="#f7ebdc" stroke-width="5"/>
<path d="M82 38 C88 54 90 70 85 90" stroke="#f4e2cd" stroke-width="5"/>
<path d="M31 30 C25 46 22 62 27 84" stroke="#d09c70" stroke-width="4"/>
<path d="M72 30 C78 46 79 64 73 86" stroke="#cf9a6f" stroke-width="4"/>
<path d="M28 58 C24 70 26 84 32 98" stroke="#eed5b8" stroke-width="4"/>
<path d="M76 58 C80 70 78 86 72 98" stroke="#ecd0b2" stroke-width="4"/>
<path d="M40 12 C34 18 30 26 28 34" stroke="#f3e2cc" stroke-width="4"/>
<path d="M62 12 C70 18 75 26 77 36" stroke="#d6a57a" stroke-width="4"/>
<path d="M88 60 C92 70 93 80 90 88" stroke="#c98f68" stroke-width="3" opacity=".8"/>
<path d="M11 70 C11 80 14 88 20 94" stroke="#d7a67c" stroke-width="3" opacity=".8"/>
</g>
<!-- clothes -->
<path d="M30 92 L36 78 L50 93 L64 76 L72 90 L76 102 H26 Z" fill="#33444e"/>
<path d="M42 93 L50 91 L60 93 L62 102 H40 Z" fill="#10161a"/>
<path d="M12 86 C16 81 22 81 26 85 L25 94 L16 93 Z" fill="#6a4a50" opacity=".9"/>
<path d="M80 82 C85 80 90 82 92 86 L88 93 L80 90 Z" fill="#75605e" opacity=".8"/>
<!-- neck -->
<path d="M40 64 H60 L62 79 L50 92 L38 79 Z" fill="#dfad90"/>
<path d="M40 66 C44 72 56 72 60 66 L60 70 C56 76 44 76 40 70 Z" fill="#c99274" opacity=".6"/>
<!-- hair over shoulders -->
<g filter="url(#esoft7)"><path d="M28 62 C26 74 28 88 34 100 L24 100 C18 90 18 76 22 64 Z" fill="#e3bc96"/>
<path d="M70 62 C74 76 72 90 66 100 L78 100 C84 90 82 76 78 64 Z" fill="#e0b68e"/></g>
<!-- face -->
<ellipse cx="49.500" cy="49" rx="17.300" ry="22" fill="url(#efc7)"/>
<!-- fringe hair over forehead -->
<path d="M31.500 48 C30 34 36 23 47 19.500 C42 26 38 34 36 46 Z" fill="#e0b78f"/>
<path d="M67.500 48 C69 34 62 23 50 19.500 C56 26 62 34 63.500 46 Z" fill="#dcae84"/>
<path d="M38 11 C45 7 58 9 65 18 C58 16 50 18 46.500 24 C44 20 41 15 38 11 Z" fill="#efd9bd"/>
<path d="M46.500 24 C48 20 52 18 56 18.500 C52 20.500 49.500 23 48.500 27 Z" fill="#c99a6e"/>
<!-- eyes/brows -->
<path d="M35.500 39.300 C38.500 37.800 42 37.800 45 39.500" stroke="#94694a" stroke-width="1.400" fill="none"/>
<path d="M53.500 39.500 C56.500 37.800 60 37.800 63 39.300" stroke="#94694a" stroke-width="1.400" fill="none"/>
<ellipse cx="40.300" cy="43" rx="3.300" ry="1.700" fill="#3f5f73"/><ellipse cx="58" cy="43" rx="3.300" ry="1.700" fill="#3f5f73"/>
<ellipse cx="40.300" cy="43.200" rx="1.500" ry="1.300" fill="#6aa0bd"/><ellipse cx="58" cy="43.200" rx="1.500" ry="1.300" fill="#6aa0bd"/>
<!-- nose -->
<path d="M46.500 53.500 C48.500 55 51.500 55 53 53.500 C51.500 52 51 49 50.500 45 C49.500 49 48 52 46.500 53.500 Z" fill="#cc9272" opacity=".8"/>
<!-- cheeks -->
<ellipse cx="38" cy="53" rx="4.500" ry="3.500" fill="#e59f8a" opacity=".35"/><ellipse cx="61" cy="53" rx="4.500" ry="3.500" fill="#e59f8a" opacity=".35"/>
<!-- lips -->
<path d="M42.500 59.500 C46 57.800 52 57.800 56 59.500 C53 64 45.500 64 42.500 59.500 Z" fill="#c4686a"/>
<path d="M43.500 59.900 C47 60.600 52 60.600 55 59.900" stroke="#8f4044" stroke-width=".800" fill="none"/>
</g></g><circle cx="50" cy="50" r="48.66" fill="none" stroke="#e2e2e2" stroke-width="2.69"/></svg>
</body></html>
